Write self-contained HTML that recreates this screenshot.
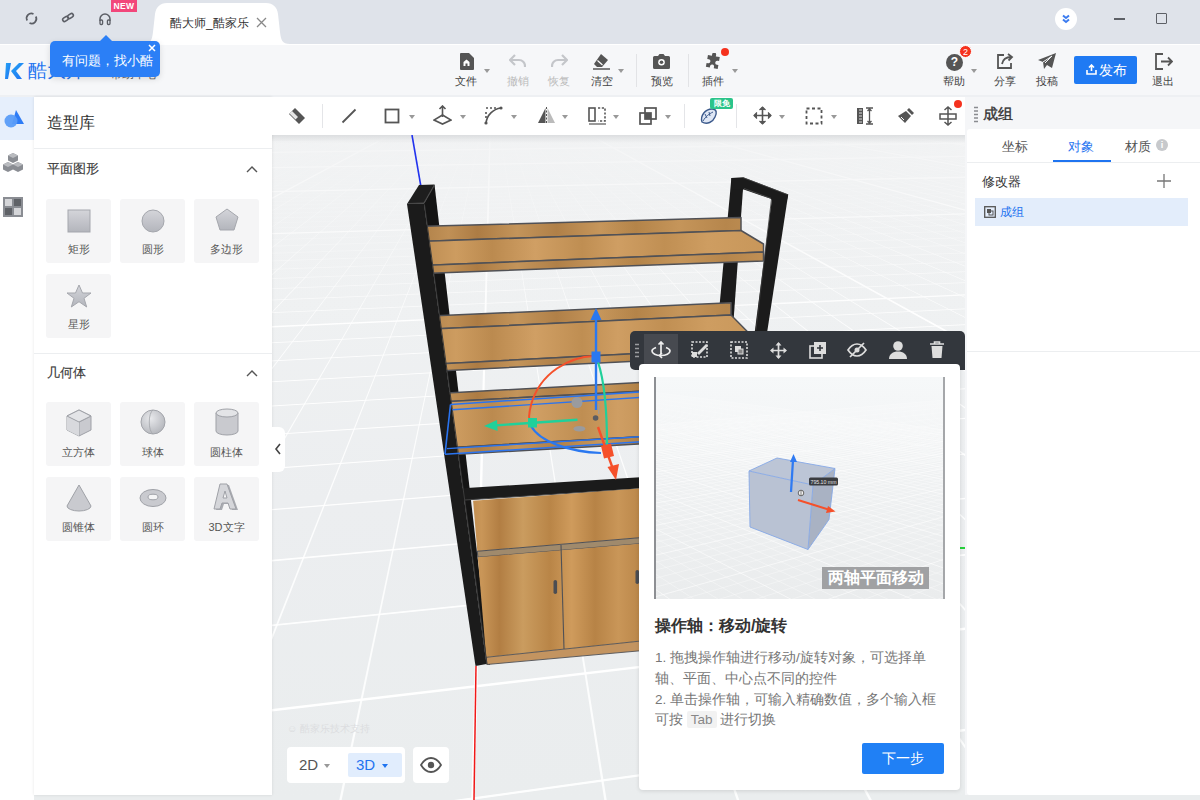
<!DOCTYPE html>
<html><head><meta charset="utf-8">
<style>
*{margin:0;padding:0;box-sizing:border-box}
html,body{width:1200px;height:800px;overflow:hidden;background:#eaedee;font-family:"Liberation Sans",sans-serif;color:#333}
.a{position:absolute}
svg{display:block}
.tabbar{left:0;top:0;width:1200px;height:44px;background:#dfe3ea}
.tab{left:143px;top:2px;width:147px;height:42px}
.hdr{left:0;top:44px;width:1200px;height:53px;background:#f6f7f9}
.side{left:0;top:97px;width:34px;height:703px;background:#fff}
.lp{left:34px;top:97px;width:238px;height:698px;background:#fff;box-shadow:0 0 3px rgba(0,0,0,.10)}
.tb2{left:272px;top:97px;width:693px;height:38px;background:#fff}
.vp{left:272px;top:135px;width:693px;height:665px;background:#e8e9ea;overflow:hidden}
.rp{left:965px;top:97px;width:235px;height:698px;background:#f5f6f8}
.lbl{font-size:11px;color:#555;text-align:center;line-height:12px;white-space:nowrap}
.tile{width:65px;height:64px;background:#f5f5f6;border-radius:3px}
.hi{width:40px;text-align:center;font-size:11px;line-height:12px;color:#444;white-space:nowrap}
.caret{width:0;height:0;border-left:3px solid transparent;border-right:3px solid transparent;border-top:4px solid #999}
</style></head><body>
<!-- TAB BAR -->
<div class="a tabbar"></div>
<svg class="a tab" width="147" height="42" viewBox="0 0 147 42"><path d="M0 42 C8 42 9 38 10 30 L12 12 C13 5 17 1 24 1 L123 1 C130 1 134 5 135 12 L137 30 C138 38 139 42 147 42 Z" fill="#fff"/></svg>
<div class="a" style="left:170px;top:16px;width:82px;font-size:12px;line-height:14px;color:#333;white-space:nowrap">酷大师_酷家乐</div>
<svg class="a" style="left:256px;top:17px" width="11" height="11"><path d="M1 1L10 10M10 1L1 10" stroke="#888" stroke-width="1.3"/></svg>
<!-- tab bar icons -->
<svg class="a" style="left:24px;top:11px" width="15" height="15" viewBox="0 0 15 15"><path d="M3.2 9.5A4.8 4.8 0 0 1 9.5 2.9" fill="none" stroke="#5c5f66" stroke-width="1.7"/><path d="M11.8 5.5A4.8 4.8 0 0 1 5.5 12.1" fill="none" stroke="#5c5f66" stroke-width="1.7"/></svg>
<svg class="a" style="left:61px;top:11px" width="14" height="14" viewBox="0 0 14 14"><rect x="1.5" y="6.2" width="6" height="3.6" rx="1.8" transform="rotate(-35 4.5 8)" fill="none" stroke="#5c5f66" stroke-width="1.6"/><rect x="6.5" y="3.2" width="6" height="3.6" rx="1.8" transform="rotate(-35 9.5 5)" fill="none" stroke="#5c5f66" stroke-width="1.6"/></svg>
<svg class="a" style="left:98px;top:12px" width="14" height="14" viewBox="0 0 14 14"><path d="M2 9V7a5 5 0 0 1 10 0v2" fill="none" stroke="#5c5f66" stroke-width="1.5"/><rect x="2" y="8" width="2.6" height="4.5" rx="1" fill="none" stroke="#5c5f66" stroke-width="1.3"/><rect x="9.4" y="8" width="2.6" height="4.5" rx="1" fill="none" stroke="#5c5f66" stroke-width="1.3"/></svg>
<div class="a" style="left:111px;top:0;width:26px;height:12px;background:#f2477b;color:#fff;font-size:8.5px;line-height:12px;text-align:center;font-weight:bold;letter-spacing:.4px">NEW</div>
<!-- window controls -->
<div class="a" style="left:1055px;top:8px;width:22px;height:22px;border-radius:11px;background:#fff"></div>
<svg class="a" style="left:1060px;top:13px" width="12" height="12" viewBox="0 0 12 12"><path d="M3 2.5L6 5L9 2.5M3 6.5L6 9L9 6.5" fill="none" stroke="#3c7cf0" stroke-width="2"/></svg>
<div class="a" style="left:1114px;top:18px;width:11px;height:1.5px;background:#5d6066"></div>
<div class="a" style="left:1156px;top:13px;width:11px;height:11px;border:1.8px solid #5d6066;border-radius:1px"></div>

<!-- HEADER -->
<div class="a hdr"></div>
<div class="a" style="left:0;top:44px;width:1200px;height:1px;background:#fff"></div>
<div class="a" style="left:0;top:95px;width:1200px;height:2px;background:#eef0f3"></div>
<div class="a" style="left:5px;top:61px;width:20px;height:20px">
<svg width="20" height="20" viewBox="0 0 20 20"><defs><linearGradient id="kg" x1="0" y1="0" x2="1" y2="1"><stop offset="0" stop-color="#25a6f5"/><stop offset="1" stop-color="#1f6ff2"/></linearGradient></defs><path d="M1 2h5l-3 16H0z" fill="url(#kg)"/><path d="M6 10L14 2h5l-8 8 6 8h-5z" fill="url(#kg)"/></svg>
</div>
<div class="a" style="left:28px;top:60px;font-size:19px;line-height:22px;color:#1f74f0;white-space:nowrap">酷大师</div>
<div class="a" style="left:110px;top:67px;font-size:12px;line-height:14px;color:#666;white-space:nowrap">帮助中心</div>


<!-- header toolbar -->
<div class="a" style="left:446px;top:52px;width:300px;height:40px">
</div>
<svg class="a" style="left:459px;top:53px" width="15" height="17" viewBox="0 0 15 17"><path d="M2 0h8l5 5v11a1 1 0 0 1-1 1H2a1 1 0 0 1-1-1V1a1 1 0 0 1 1-1z" fill="#555"/><path d="M4.5 13V9l3-2.5 3 2.5v4z" fill="#fff"/><rect x="6.5" y="10.5" width="2" height="2.5" fill="#555"/></svg>
<div class="a caret" style="left:484px;top:69px"></div>
<div class="a hi" style="left:446px;top:75px">文件</div>
<svg class="a" style="left:509px;top:54px" width="17" height="14" viewBox="0 0 17 14"><path d="M6 1L1 6l5 5" fill="none" stroke="#c4c6ca" stroke-width="2.2"/><path d="M2 6h8a6 6 0 0 1 6 6v1" fill="none" stroke="#c4c6ca" stroke-width="2.2"/></svg>
<div class="a hi" style="left:498px;top:75px;color:#bbb">撤销</div>
<svg class="a" style="left:551px;top:54px" width="17" height="14" viewBox="0 0 17 14"><path d="M11 1l5 5-5 5" fill="none" stroke="#c4c6ca" stroke-width="2.2"/><path d="M15 6H7a6 6 0 0 0-6 6v1" fill="none" stroke="#c4c6ca" stroke-width="2.2"/></svg>
<div class="a hi" style="left:539px;top:75px;color:#bbb">恢复</div>
<svg class="a" style="left:592px;top:53px" width="19" height="17" viewBox="0 0 19 17"><path d="M9 1l7 6-6 7H5L2 11z" fill="#555"/><path d="M5.5 7.5l5 4.5" stroke="#fff" stroke-width="1.2"/><path d="M1 16h17" stroke="#555" stroke-width="1.5"/></svg>
<div class="a caret" style="left:618px;top:69px"></div>
<div class="a hi" style="left:582px;top:75px">清空</div>
<div class="a" style="left:636px;top:54px;width:1px;height:33px;background:#e2e3e6"></div>
<svg class="a" style="left:653px;top:54px" width="17" height="15" viewBox="0 0 17 15"><path d="M5 2l1.5-2h4L12 2h3.5a1.5 1.5 0 0 1 1.5 1.5v10a1.5 1.5 0 0 1-1.5 1.5h-14A1.5 1.5 0 0 1 0 13.5v-10A1.5 1.5 0 0 1 1.5 2z" fill="#555"/><circle cx="8.5" cy="8.3" r="3.3" fill="#fff"/><circle cx="8.5" cy="8.3" r="1.8" fill="#555"/></svg>
<div class="a hi" style="left:642px;top:75px">预览</div>
<div class="a" style="left:688px;top:54px;width:1px;height:33px;background:#e2e3e6"></div>
<svg class="a" style="left:705px;top:53px" width="17" height="17" viewBox="0 0 17 17"><path d="M6 1.5a2 2 0 0 1 4 0V3h4v4h-1.5a2 2 0 0 0 0 4H14v4H10v-1.5a2 2 0 0 0-4 0V15H2v-4h1.5a2 2 0 0 0 0-4H2V3h4z" fill="#555" transform="rotate(10 8 8)"/></svg>
<div class="a" style="left:721px;top:48px;width:8px;height:8px;border-radius:4px;background:#f5321e"></div>
<div class="a caret" style="left:732px;top:69px"></div>
<div class="a hi" style="left:693px;top:75px">插件</div>
<!-- right header -->
<div class="a" style="left:946px;top:54px;width:17px;height:17px;border-radius:9px;background:#555;color:#fff;font-weight:bold;font-size:12px;line-height:17px;text-align:center">?</div>
<div class="a" style="left:959px;top:45px;width:13px;height:13px;border-radius:7px;background:#f5321e;color:#fff;font-size:9px;line-height:13px;text-align:center;border:1px solid #fff">2</div>
<div class="a caret" style="left:971px;top:69px"></div>
<div class="a hi" style="left:934px;top:75px">帮助</div>
<svg class="a" style="left:996px;top:53px" width="18" height="17" viewBox="0 0 18 17"><path d="M8 2H2v13h13V10" fill="none" stroke="#555" stroke-width="1.8"/><path d="M6 11c1-5 4-7 9-7" fill="none" stroke="#555" stroke-width="1.8"/><path d="M12 1l4 3-3.5 3.5" fill="none" stroke="#555" stroke-width="1.8"/></svg>
<div class="a hi" style="left:985px;top:75px">分享</div>
<svg class="a" style="left:1038px;top:53px" width="19" height="17" viewBox="0 0 19 17"><path d="M18 0L0 7l5 2 1 7 3-4 5 3z" fill="#555"/><path d="M5 9l9-6-7 7" fill="none" stroke="#f6f7f9" stroke-width="1"/></svg>
<div class="a hi" style="left:1027px;top:75px">投稿</div>
<div class="a" style="left:1074px;top:56px;width:63px;height:28px;border-radius:2px;background:#1f7af3"></div>
<svg class="a" style="left:1086px;top:64px" width="11" height="11" viewBox="0 0 11 11"><path d="M5.5 1v6M3 3.5L5.5 1 8 3.5" fill="none" stroke="#fff" stroke-width="1.6"/><path d="M1 6v4h9V6" fill="none" stroke="#fff" stroke-width="1.6"/></svg>
<div class="a" style="left:1099px;top:62px;font-size:14px;line-height:16px;color:#fff;white-space:nowrap">发布</div>
<svg class="a" style="left:1155px;top:53px" width="18" height="17" viewBox="0 0 18 17"><path d="M8 1H1v15h7" fill="none" stroke="#555" stroke-width="1.8"/><path d="M6 8.5h11M13 4.5l4 4-4 4" fill="none" stroke="#555" stroke-width="1.8"/></svg>
<div class="a hi" style="left:1143px;top:75px">退出</div>

<!--VP-->
<svg class="a" style="left:272px;top:135px" width="693" height="665" viewBox="272 135 693 665">
<defs>
<linearGradient id="vbg" x1="0" y1="135" x2="0" y2="800" gradientUnits="userSpaceOnUse">
<stop offset="0" stop-color="#f2f4f5"/><stop offset="0.25" stop-color="#eff1f2"/><stop offset="0.55" stop-color="#eceef0"/><stop offset="1" stop-color="#eaedee"/></linearGradient>
<linearGradient id="fog" x1="0" y1="135" x2="0" y2="800" gradientUnits="userSpaceOnUse">
<stop offset="0" stop-color="#f1f2f3" stop-opacity=".8"/><stop offset="0.1" stop-color="#f0f1f2" stop-opacity=".45"/><stop offset="0.3" stop-color="#eeeff0" stop-opacity="0"/></linearGradient>
</defs>
<rect x="272" y="135" width="693" height="665" fill="url(#vbg)"/>
<g><path d="M-179.6 95.0L1375.6 91.2" stroke="#fff" stroke-width="1.30" opacity="1.00"/>
<path d="M-182.0 95.1L1378.0 91.2" stroke="#fff" stroke-width="0.45" opacity="0.25"/>
<path d="M-184.6 95.1L1380.4 91.3" stroke="#fff" stroke-width="0.45" opacity="0.25"/>
<path d="M-187.1 95.2L1382.8 91.3" stroke="#fff" stroke-width="0.45" opacity="0.25"/>
<path d="M-189.6 95.2L1385.3 91.3" stroke="#fff" stroke-width="0.45" opacity="0.25"/>
<path d="M-192.2 95.3L1387.7 91.3" stroke="#fff" stroke-width="0.45" opacity="0.25"/>
<path d="M-194.8 95.4L1390.2 91.4" stroke="#fff" stroke-width="0.45" opacity="0.25"/>
<path d="M-197.4 95.4L1392.7 91.4" stroke="#fff" stroke-width="0.45" opacity="0.25"/>
<path d="M-200.0 95.5L1395.2 91.4" stroke="#fff" stroke-width="0.45" opacity="0.25"/>
<path d="M-175.9 95.5L1397.7 91.5" stroke="#fff" stroke-width="0.45" opacity="0.25"/>
<path d="M-178.5 95.5L1374.6 91.6" stroke="#fff" stroke-width="1.30" opacity="1.00"/>
<path d="M-181.0 95.6L1377.0 91.6" stroke="#fff" stroke-width="0.45" opacity="0.25"/>
<path d="M-183.6 95.6L1379.5 91.6" stroke="#fff" stroke-width="0.45" opacity="0.25"/>
<path d="M-186.2 95.7L1382.0 91.6" stroke="#fff" stroke-width="0.45" opacity="0.25"/>
<path d="M-188.9 95.7L1384.5 91.7" stroke="#fff" stroke-width="0.45" opacity="0.25"/>
<path d="M-191.5 95.8L1387.1 91.7" stroke="#fff" stroke-width="0.45" opacity="0.25"/>
<path d="M-194.2 95.9L1389.6 91.7" stroke="#fff" stroke-width="0.45" opacity="0.25"/>
<path d="M-196.9 95.9L1392.2 91.8" stroke="#fff" stroke-width="0.45" opacity="0.25"/>
<path d="M-199.6 96.0L1394.7 91.8" stroke="#fff" stroke-width="0.45" opacity="0.25"/>
<path d="M-175.6 96.0L1397.3 91.8" stroke="#fff" stroke-width="0.45" opacity="0.25"/>
<path d="M-178.3 96.0L1399.9 91.9" stroke="#fff" stroke-width="1.30" opacity="1.00"/>
<path d="M-180.9 96.1L1376.9 92.0" stroke="#fff" stroke-width="0.45" opacity="0.25"/>
<path d="M-183.6 96.1L1379.5 92.0" stroke="#fff" stroke-width="0.45" opacity="0.25"/>
<path d="M-186.3 96.2L1382.0 92.0" stroke="#fff" stroke-width="0.45" opacity="0.25"/>
<path d="M-189.0 96.3L1384.7 92.1" stroke="#fff" stroke-width="0.45" opacity="0.25"/>
<path d="M-191.7 96.3L1387.3 92.1" stroke="#fff" stroke-width="0.45" opacity="0.25"/>
<path d="M-194.5 96.4L1389.9 92.1" stroke="#fff" stroke-width="0.45" opacity="0.25"/>
<path d="M-197.3 96.5L1392.6 92.2" stroke="#fff" stroke-width="0.45" opacity="0.25"/>
<path d="M-173.5 96.4L1395.2 92.2" stroke="#fff" stroke-width="0.45" opacity="0.25"/>
<path d="M-176.2 96.5L1397.9 92.2" stroke="#fff" stroke-width="0.45" opacity="0.25"/>
<path d="M-179.0 96.6L1375.0 92.3" stroke="#fff" stroke-width="1.30" opacity="1.00"/>
<path d="M-181.7 96.6L1377.6 92.4" stroke="#fff" stroke-width="0.45" opacity="0.25"/>
<path d="M-184.5 96.7L1380.3 92.4" stroke="#fff" stroke-width="0.45" opacity="0.25"/>
<path d="M-187.3 96.8L1383.0 92.4" stroke="#fff" stroke-width="0.45" opacity="0.25"/>
<path d="M-190.1 96.8L1385.7 92.5" stroke="#fff" stroke-width="0.45" opacity="0.25"/>
<path d="M-193.0 96.9L1388.4 92.5" stroke="#fff" stroke-width="0.45" opacity="0.25"/>
<path d="M-195.8 97.0L1391.2 92.5" stroke="#fff" stroke-width="0.45" opacity="0.25"/>
<path d="M-198.7 97.0L1393.9 92.6" stroke="#fff" stroke-width="0.45" opacity="0.25"/>
<path d="M-175.0 97.0L1396.7 92.6" stroke="#fff" stroke-width="0.45" opacity="0.25"/>
<path d="M-177.8 97.1L1399.5 92.7" stroke="#fff" stroke-width="0.45" opacity="0.25"/>
<path d="M-180.7 97.2L1376.6 92.8" stroke="#fff" stroke-width="1.30" opacity="1.00"/>
<path d="M-183.5 97.2L1379.4 92.8" stroke="#fff" stroke-width="0.45" opacity="0.25"/>
<path d="M-186.4 97.3L1382.1 92.8" stroke="#fff" stroke-width="0.45" opacity="0.25"/>
<path d="M-189.3 97.4L1384.9 92.9" stroke="#fff" stroke-width="0.45" opacity="0.25"/>
<path d="M-192.3 97.5L1387.7 92.9" stroke="#fff" stroke-width="0.45" opacity="0.25"/>
<path d="M-195.3 97.5L1390.6 93.0" stroke="#fff" stroke-width="0.45" opacity="0.25"/>
<path d="M-198.2 97.6L1393.4 93.0" stroke="#fff" stroke-width="0.45" opacity="0.25"/>
<path d="M-174.6 97.6L1396.3 93.0" stroke="#fff" stroke-width="0.45" opacity="0.25"/>
<path d="M-177.6 97.7L1399.2 93.1" stroke="#fff" stroke-width="0.45" opacity="0.25"/>
<path d="M-180.5 97.8L1376.4 93.2" stroke="#fff" stroke-width="0.45" opacity="0.25"/>
<path d="M-183.5 97.8L1379.3 93.2" stroke="#fff" stroke-width="1.30" opacity="1.00"/>
<path d="M-186.5 97.9L1382.1 93.3" stroke="#fff" stroke-width="0.45" opacity="0.25"/>
<path d="M-189.5 98.0L1385.0 93.3" stroke="#fff" stroke-width="0.45" opacity="0.25"/>
<path d="M-192.5 98.1L1387.9 93.4" stroke="#fff" stroke-width="0.45" opacity="0.25"/>
<path d="M-195.6 98.1L1390.9 93.4" stroke="#fff" stroke-width="0.45" opacity="0.25"/>
<path d="M-198.7 98.2L1393.8 93.4" stroke="#fff" stroke-width="0.45" opacity="0.25"/>
<path d="M-175.2 98.2L1396.8 93.5" stroke="#fff" stroke-width="0.45" opacity="0.25"/>
<path d="M-178.2 98.3L1399.8 93.5" stroke="#fff" stroke-width="0.45" opacity="0.25"/>
<path d="M-181.2 98.4L1377.1 93.6" stroke="#fff" stroke-width="0.45" opacity="0.25"/>
<path d="M-184.3 98.5L1380.1 93.7" stroke="#fff" stroke-width="0.45" opacity="0.25"/>
<path d="M-187.4 98.5L1383.0 93.7" stroke="#fff" stroke-width="1.30" opacity="1.00"/>
<path d="M-190.6 98.6L1386.0 93.8" stroke="#fff" stroke-width="0.45" opacity="0.25"/>
<path d="M-193.7 98.7L1389.1 93.8" stroke="#fff" stroke-width="0.45" opacity="0.25"/>
<path d="M-196.9 98.8L1392.1 93.9" stroke="#fff" stroke-width="0.45" opacity="0.25"/>
<path d="M-173.6 98.8L1395.2 93.9" stroke="#fff" stroke-width="0.45" opacity="0.25"/>
<path d="M-176.7 98.9L1398.2 93.9" stroke="#fff" stroke-width="0.45" opacity="0.25"/>
<path d="M-179.8 99.0L1375.7 94.1" stroke="#fff" stroke-width="0.45" opacity="0.25"/>
<path d="M-183.0 99.0L1378.8 94.1" stroke="#fff" stroke-width="0.45" opacity="0.25"/>
<path d="M-186.2 99.1L1381.8 94.2" stroke="#fff" stroke-width="0.45" opacity="0.25"/>
<path d="M-189.4 99.2L1384.9 94.2" stroke="#fff" stroke-width="0.45" opacity="0.25"/>
<path d="M-192.7 99.3L1388.1 94.3" stroke="#fff" stroke-width="1.30" opacity="1.00"/>
<path d="M-196.0 99.4L1391.2 94.3" stroke="#fff" stroke-width="0.45" opacity="0.25"/>
<path d="M-199.3 99.5L1394.4 94.4" stroke="#fff" stroke-width="0.45" opacity="0.25"/>
<path d="M-176.0 99.5L1397.5 94.4" stroke="#fff" stroke-width="0.45" opacity="0.25"/>
<path d="M-179.3 99.6L1375.1 94.5" stroke="#fff" stroke-width="0.45" opacity="0.25"/>
<path d="M-182.5 99.7L1378.3 94.6" stroke="#fff" stroke-width="0.45" opacity="0.25"/>
<path d="M-185.8 99.8L1381.5 94.6" stroke="#fff" stroke-width="0.45" opacity="0.25"/>
<path d="M-189.2 99.9L1384.7 94.7" stroke="#fff" stroke-width="0.45" opacity="0.25"/>
<path d="M-192.6 100.0L1387.9 94.7" stroke="#fff" stroke-width="0.45" opacity="0.25"/>
<path d="M-196.0 100.0L1391.1 94.8" stroke="#fff" stroke-width="0.45" opacity="0.25"/>
<path d="M-199.4 100.1L1394.4 94.8" stroke="#fff" stroke-width="1.30" opacity="1.00"/>
<path d="M-176.2 100.2L1397.7 94.9" stroke="#fff" stroke-width="0.45" opacity="0.25"/>
<path d="M-179.6 100.2L1375.4 95.0" stroke="#fff" stroke-width="0.45" opacity="0.25"/>
<path d="M-183.0 100.3L1378.7 95.1" stroke="#fff" stroke-width="0.45" opacity="0.25"/>
<path d="M-186.4 100.4L1382.0 95.1" stroke="#fff" stroke-width="0.45" opacity="0.25"/>
<path d="M-189.9 100.5L1385.3 95.2" stroke="#fff" stroke-width="0.45" opacity="0.25"/>
<path d="M-193.4 100.7L1388.6 95.2" stroke="#fff" stroke-width="0.45" opacity="0.25"/>
<path d="M-196.9 100.8L1392.0 95.3" stroke="#fff" stroke-width="0.45" opacity="0.25"/>
<path d="M-173.9 100.8L1395.4 95.3" stroke="#fff" stroke-width="0.45" opacity="0.25"/>
<path d="M-177.4 100.9L1398.8 95.4" stroke="#fff" stroke-width="0.45" opacity="0.25"/>
<path d="M-180.9 101.0L1376.6 95.5" stroke="#fff" stroke-width="1.30" opacity="1.00"/>
<path d="M-184.4 101.1L1380.0 95.6" stroke="#fff" stroke-width="0.45" opacity="0.25"/>
<path d="M-188.0 101.2L1383.4 95.7" stroke="#fff" stroke-width="0.45" opacity="0.25"/>
<path d="M-191.6 101.3L1386.9 95.7" stroke="#fff" stroke-width="0.45" opacity="0.25"/>
<path d="M-195.2 101.4L1390.4 95.8" stroke="#fff" stroke-width="0.45" opacity="0.25"/>
<path d="M-198.9 101.5L1393.9 95.8" stroke="#fff" stroke-width="0.45" opacity="0.25"/>
<path d="M-176.0 101.5L1397.4 95.9" stroke="#fff" stroke-width="0.45" opacity="0.25"/>
<path d="M-179.6 101.6L1375.3 96.0" stroke="#fff" stroke-width="0.45" opacity="0.25"/>
<path d="M-183.2 101.8L1378.8 96.1" stroke="#fff" stroke-width="0.45" opacity="0.25"/>
<path d="M-186.9 101.9L1382.4 96.2" stroke="#fff" stroke-width="0.45" opacity="0.25"/>
<path d="M-190.6 102.0L1385.9 96.2" stroke="#fff" stroke-width="1.30" opacity="1.00"/>
<path d="M-194.4 102.1L1389.5 96.3" stroke="#fff" stroke-width="0.45" opacity="0.25"/>
<path d="M-198.2 102.2L1393.2 96.4" stroke="#fff" stroke-width="0.45" opacity="0.25"/>
<path d="M-175.4 102.2L1396.8 96.4" stroke="#fff" stroke-width="0.45" opacity="0.25"/>
<path d="M-179.1 102.4L1374.9 96.6" stroke="#fff" stroke-width="0.45" opacity="0.25"/>
<path d="M-182.9 102.5L1378.5 96.6" stroke="#fff" stroke-width="0.45" opacity="0.25"/>
<path d="M-186.7 102.6L1382.1 96.7" stroke="#fff" stroke-width="0.45" opacity="0.25"/>
<path d="M-190.5 102.7L1385.8 96.8" stroke="#fff" stroke-width="0.45" opacity="0.25"/>
<path d="M-194.4 102.9L1389.6 96.8" stroke="#fff" stroke-width="0.45" opacity="0.25"/>
<path d="M-198.4 103.0L1393.3 96.9" stroke="#fff" stroke-width="0.45" opacity="0.25"/>
<path d="M-175.7 103.0L1397.1 97.0" stroke="#fff" stroke-width="1.30" opacity="1.00"/>
<path d="M-179.6 103.1L1375.3 97.1" stroke="#fff" stroke-width="0.45" opacity="0.25"/>
<path d="M-183.5 103.3L1379.0 97.2" stroke="#fff" stroke-width="0.45" opacity="0.25"/>
<path d="M-187.4 103.4L1382.8 97.3" stroke="#fff" stroke-width="0.45" opacity="0.25"/>
<path d="M-191.4 103.5L1386.6 97.4" stroke="#fff" stroke-width="0.45" opacity="0.25"/>
<path d="M-195.5 103.7L1390.5 97.4" stroke="#fff" stroke-width="0.45" opacity="0.25"/>
<path d="M-199.6 103.8L1394.4 97.5" stroke="#fff" stroke-width="0.45" opacity="0.25"/>
<path d="M-177.0 103.8L1398.3 97.6" stroke="#fff" stroke-width="0.45" opacity="0.25"/>
<path d="M-181.0 104.0L1376.6 97.7" stroke="#fff" stroke-width="0.45" opacity="0.25"/>
<path d="M-185.1 104.1L1380.5 97.8" stroke="#fff" stroke-width="0.45" opacity="0.25"/>
<path d="M-189.2 104.3L1384.5 97.9" stroke="#fff" stroke-width="1.30" opacity="1.00"/>
<path d="M-193.3 104.4L1388.4 98.0" stroke="#fff" stroke-width="0.45" opacity="0.25"/>
<path d="M-197.5 104.6L1392.4 98.1" stroke="#fff" stroke-width="0.45" opacity="0.25"/>
<path d="M-175.2 104.6L1396.5 98.1" stroke="#fff" stroke-width="0.45" opacity="0.25"/>
<path d="M-179.3 104.7L1374.9 98.3" stroke="#fff" stroke-width="0.45" opacity="0.25"/>
<path d="M-183.5 104.9L1379.0 98.4" stroke="#fff" stroke-width="0.45" opacity="0.25"/>
<path d="M-187.7 105.0L1383.0 98.5" stroke="#fff" stroke-width="0.45" opacity="0.25"/>
<path d="M-192.0 105.2L1387.1 98.6" stroke="#fff" stroke-width="0.45" opacity="0.25"/>
<path d="M-196.3 105.4L1391.3 98.6" stroke="#fff" stroke-width="0.45" opacity="0.25"/>
<path d="M-174.2 105.4L1395.5 98.7" stroke="#fff" stroke-width="0.45" opacity="0.25"/>
<path d="M-178.4 105.6L1399.7 98.8" stroke="#fff" stroke-width="1.30" opacity="1.00"/>
<path d="M-182.7 105.7L1378.2 99.0" stroke="#fff" stroke-width="0.45" opacity="0.25"/>
<path d="M-187.1 105.9L1382.4 99.1" stroke="#fff" stroke-width="0.45" opacity="0.25"/>
<path d="M-191.6 106.0L1386.7 99.2" stroke="#fff" stroke-width="0.45" opacity="0.25"/>
<path d="M-196.0 106.2L1391.0 99.3" stroke="#fff" stroke-width="0.45" opacity="0.25"/>
<path d="M-174.0 106.3L1395.3 99.4" stroke="#fff" stroke-width="0.45" opacity="0.25"/>
<path d="M-178.4 106.4L1399.6 99.4" stroke="#fff" stroke-width="0.45" opacity="0.25"/>
<path d="M-182.9 106.6L1378.3 99.6" stroke="#fff" stroke-width="0.45" opacity="0.25"/>
<path d="M-187.4 106.8L1382.7 99.7" stroke="#fff" stroke-width="0.45" opacity="0.25"/>
<path d="M-192.0 107.0L1387.1 99.8" stroke="#fff" stroke-width="0.45" opacity="0.25"/>
<path d="M-196.7 107.1L1391.5 99.9" stroke="#fff" stroke-width="1.30" opacity="1.00"/>
<path d="M-174.8 107.2L1396.0 100.0" stroke="#fff" stroke-width="0.45" opacity="0.25"/>
<path d="M-179.4 107.4L1374.9 100.2" stroke="#fff" stroke-width="0.45" opacity="0.25"/>
<path d="M-184.0 107.6L1379.4 100.3" stroke="#fff" stroke-width="0.45" opacity="0.25"/>
<path d="M-188.7 107.7L1383.9 100.4" stroke="#fff" stroke-width="0.45" opacity="0.25"/>
<path d="M-193.5 107.9L1388.5 100.5" stroke="#fff" stroke-width="0.45" opacity="0.25"/>
<path d="M-198.4 108.1L1393.1 100.6" stroke="#fff" stroke-width="0.45" opacity="0.25"/>
<path d="M-176.6 108.2L1397.7 100.7" stroke="#fff" stroke-width="0.45" opacity="0.25"/>
<path d="M-181.3 108.4L1376.8 101.0" stroke="#fff" stroke-width="0.45" opacity="0.25"/>
<path d="M-186.2 108.6L1381.4 101.1" stroke="#fff" stroke-width="0.45" opacity="0.25"/>
<path d="M-191.1 108.8L1386.1 101.2" stroke="#fff" stroke-width="1.30" opacity="1.00"/>
<path d="M-196.1 109.0L1390.9 101.3" stroke="#fff" stroke-width="0.45" opacity="0.25"/>
<path d="M-174.5 109.1L1395.7 101.4" stroke="#fff" stroke-width="0.45" opacity="0.25"/>
<path d="M-179.4 109.3L1374.9 101.6" stroke="#fff" stroke-width="0.45" opacity="0.25"/>
<path d="M-184.4 109.5L1379.7 101.8" stroke="#fff" stroke-width="0.45" opacity="0.25"/>
<path d="M-189.5 109.7L1384.5 101.9" stroke="#fff" stroke-width="0.45" opacity="0.25"/>
<path d="M-194.6 109.9L1389.4 102.0" stroke="#fff" stroke-width="0.45" opacity="0.25"/>
<path d="M-199.8 110.1L1394.4 102.1" stroke="#fff" stroke-width="0.45" opacity="0.25"/>
<path d="M-178.3 110.2L1399.4 102.2" stroke="#fff" stroke-width="0.45" opacity="0.25"/>
<path d="M-183.5 110.5L1378.7 102.5" stroke="#fff" stroke-width="0.45" opacity="0.25"/>
<path d="M-188.7 110.7L1383.7 102.6" stroke="#fff" stroke-width="1.30" opacity="1.00"/>
<path d="M-194.0 110.9L1388.8 102.7" stroke="#fff" stroke-width="0.45" opacity="0.25"/>
<path d="M-199.4 111.2L1393.9 102.8" stroke="#fff" stroke-width="0.45" opacity="0.25"/>
<path d="M-178.1 111.3L1399.1 103.0" stroke="#fff" stroke-width="0.45" opacity="0.25"/>
<path d="M-183.4 111.5L1378.6 103.2" stroke="#fff" stroke-width="0.45" opacity="0.25"/>
<path d="M-188.8 111.8L1383.8 103.4" stroke="#fff" stroke-width="0.45" opacity="0.25"/>
<path d="M-194.3 112.0L1389.0 103.5" stroke="#fff" stroke-width="0.45" opacity="0.25"/>
<path d="M-199.9 112.3L1394.4 103.6" stroke="#fff" stroke-width="0.45" opacity="0.25"/>
<path d="M-178.8 112.4L1399.7 103.8" stroke="#fff" stroke-width="0.45" opacity="0.25"/>
<path d="M-184.3 112.6L1379.4 104.0" stroke="#fff" stroke-width="0.45" opacity="0.25"/>
<path d="M-189.9 112.9L1384.8 104.2" stroke="#fff" stroke-width="1.30" opacity="1.00"/>
<path d="M-195.6 113.2L1390.2 104.3" stroke="#fff" stroke-width="0.45" opacity="0.25"/>
<path d="M-174.8 113.3L1395.7 104.5" stroke="#fff" stroke-width="0.45" opacity="0.25"/>
<path d="M-180.5 113.6L1375.7 104.8" stroke="#fff" stroke-width="0.45" opacity="0.25"/>
<path d="M-186.2 113.8L1381.2 104.9" stroke="#fff" stroke-width="0.45" opacity="0.25"/>
<path d="M-192.0 114.1L1386.8 105.1" stroke="#fff" stroke-width="0.45" opacity="0.25"/>
<path d="M-198.0 114.4L1392.4 105.2" stroke="#fff" stroke-width="0.45" opacity="0.25"/>
<path d="M-177.3 114.6L1398.2 105.4" stroke="#fff" stroke-width="0.45" opacity="0.25"/>
<path d="M-183.2 114.9L1378.3 105.7" stroke="#fff" stroke-width="0.45" opacity="0.25"/>
<path d="M-189.2 115.2L1384.0 105.8" stroke="#fff" stroke-width="0.45" opacity="0.25"/>
<path d="M-195.3 115.5L1389.8 106.0" stroke="#fff" stroke-width="1.30" opacity="1.00"/>
<path d="M-174.9 115.6L1395.8 106.2" stroke="#fff" stroke-width="0.45" opacity="0.25"/>
<path d="M-181.0 115.9L1376.1 106.5" stroke="#fff" stroke-width="0.45" opacity="0.25"/>
<path d="M-187.1 116.3L1382.0 106.7" stroke="#fff" stroke-width="0.45" opacity="0.25"/>
<path d="M-193.4 116.6L1388.0 106.9" stroke="#fff" stroke-width="0.45" opacity="0.25"/>
<path d="M-199.8 116.9L1394.1 107.0" stroke="#fff" stroke-width="0.45" opacity="0.25"/>
<path d="M-179.5 117.1L1374.6 107.4" stroke="#fff" stroke-width="0.45" opacity="0.25"/>
<path d="M-185.9 117.4L1380.7 107.6" stroke="#fff" stroke-width="0.45" opacity="0.25"/>
<path d="M-192.4 117.8L1386.9 107.7" stroke="#fff" stroke-width="0.45" opacity="0.25"/>
<path d="M-199.0 118.2L1393.2 107.9" stroke="#fff" stroke-width="0.45" opacity="0.25"/>
<path d="M-178.9 118.4L1399.6 108.1" stroke="#fff" stroke-width="1.30" opacity="1.00"/>
<path d="M-185.5 118.7L1380.3 108.5" stroke="#fff" stroke-width="0.45" opacity="0.25"/>
<path d="M-192.2 119.1L1386.7 108.7" stroke="#fff" stroke-width="0.45" opacity="0.25"/>
<path d="M-199.0 119.5L1393.2 108.9" stroke="#fff" stroke-width="0.45" opacity="0.25"/>
<path d="M-179.2 119.7L1399.8 109.1" stroke="#fff" stroke-width="0.45" opacity="0.25"/>
<path d="M-186.0 120.1L1380.8 109.5" stroke="#fff" stroke-width="0.45" opacity="0.25"/>
<path d="M-193.0 120.5L1387.4 109.7" stroke="#fff" stroke-width="0.45" opacity="0.25"/>
<path d="M-173.5 120.7L1394.2 109.9" stroke="#fff" stroke-width="0.45" opacity="0.25"/>
<path d="M-180.5 121.1L1375.4 110.3" stroke="#fff" stroke-width="0.45" opacity="0.25"/>
<path d="M-187.6 121.6L1382.2 110.5" stroke="#fff" stroke-width="0.45" opacity="0.25"/>
<path d="M-194.8 122.0L1389.1 110.8" stroke="#fff" stroke-width="1.30" opacity="1.00"/>
<path d="M-175.6 122.3L1396.1 111.0" stroke="#fff" stroke-width="0.45" opacity="0.25"/>
<path d="M-182.8 122.7L1377.5 111.4" stroke="#fff" stroke-width="0.45" opacity="0.25"/>
<path d="M-190.2 123.2L1384.6 111.7" stroke="#fff" stroke-width="0.45" opacity="0.25"/>
<path d="M-197.7 123.6L1391.8 111.9" stroke="#fff" stroke-width="0.45" opacity="0.25"/>
<path d="M-178.7 123.9L1399.1 112.2" stroke="#fff" stroke-width="0.45" opacity="0.25"/>
<path d="M-186.2 124.4L1380.8 112.6" stroke="#fff" stroke-width="0.45" opacity="0.25"/>
<path d="M-193.9 124.9L1388.1 112.9" stroke="#fff" stroke-width="0.45" opacity="0.25"/>
<path d="M-175.2 125.2L1395.6 113.2" stroke="#fff" stroke-width="0.45" opacity="0.25"/>
<path d="M-183.0 125.7L1377.6 113.6" stroke="#fff" stroke-width="0.45" opacity="0.25"/>
<path d="M-190.9 126.2L1385.2 113.9" stroke="#fff" stroke-width="1.30" opacity="1.00"/>
<path d="M-199.0 126.8L1392.9 114.2" stroke="#fff" stroke-width="0.45" opacity="0.25"/>
<path d="M-180.5 127.1L1375.1 114.7" stroke="#fff" stroke-width="0.45" opacity="0.25"/>
<path d="M-188.6 127.7L1382.9 115.0" stroke="#fff" stroke-width="0.45" opacity="0.25"/>
<path d="M-197.0 128.3L1390.9 115.3" stroke="#fff" stroke-width="0.45" opacity="0.25"/>
<path d="M-178.8 128.6L1399.0 115.6" stroke="#fff" stroke-width="0.45" opacity="0.25"/>
<path d="M-187.1 129.2L1381.4 116.1" stroke="#fff" stroke-width="0.45" opacity="0.25"/>
<path d="M-195.7 129.9L1389.6 116.5" stroke="#fff" stroke-width="0.45" opacity="0.25"/>
<path d="M-177.8 130.3L1398.0 116.8" stroke="#fff" stroke-width="0.45" opacity="0.25"/>
<path d="M-186.5 130.9L1380.8 117.4" stroke="#fff" stroke-width="0.45" opacity="0.25"/>
<path d="M-195.4 131.6L1389.3 117.7" stroke="#fff" stroke-width="1.30" opacity="1.00"/>
<path d="M-177.8 132.0L1397.9 118.1" stroke="#fff" stroke-width="0.45" opacity="0.25"/>
<path d="M-186.8 132.7L1381.0 118.7" stroke="#fff" stroke-width="0.45" opacity="0.25"/>
<path d="M-196.0 133.4L1389.7 119.0" stroke="#fff" stroke-width="0.45" opacity="0.25"/>
<path d="M-178.7 133.9L1398.7 119.4" stroke="#fff" stroke-width="0.45" opacity="0.25"/>
<path d="M-188.0 134.6L1382.1 120.1" stroke="#fff" stroke-width="0.45" opacity="0.25"/>
<path d="M-197.6 135.4L1391.2 120.5" stroke="#fff" stroke-width="0.45" opacity="0.25"/>
<path d="M-180.6 135.9L1374.9 121.1" stroke="#fff" stroke-width="0.45" opacity="0.25"/>
<path d="M-190.4 136.7L1384.2 121.5" stroke="#fff" stroke-width="0.45" opacity="0.25"/>
<path d="M-173.8 137.2L1393.7 122.0" stroke="#fff" stroke-width="0.45" opacity="0.25"/>
<path d="M-183.7 138.1L1377.7 122.7" stroke="#fff" stroke-width="1.30" opacity="1.00"/>
<path d="M-193.8 138.9L1387.4 123.1" stroke="#fff" stroke-width="0.45" opacity="0.25"/>
<path d="M-177.6 139.6L1397.3 123.6" stroke="#fff" stroke-width="0.45" opacity="0.25"/>
<path d="M-187.9 140.5L1381.7 124.3" stroke="#fff" stroke-width="0.45" opacity="0.25"/>
<path d="M-198.5 141.4L1391.8 124.8" stroke="#fff" stroke-width="0.45" opacity="0.25"/>
<path d="M-182.6 142.1L1376.5 125.6" stroke="#fff" stroke-width="0.45" opacity="0.25"/>
<path d="M-193.4 143.1L1386.9 126.1" stroke="#fff" stroke-width="0.45" opacity="0.25"/>
<path d="M-177.9 143.8L1397.5 126.7" stroke="#fff" stroke-width="0.45" opacity="0.25"/>
<path d="M-189.0 144.9L1382.5 127.5" stroke="#fff" stroke-width="0.45" opacity="0.25"/>
<path d="M-173.9 145.6L1393.4 128.1" stroke="#fff" stroke-width="0.45" opacity="0.25"/>
<path d="M-185.2 146.7L1378.9 129.0" stroke="#fff" stroke-width="1.30" opacity="1.00"/>
<path d="M-197.0 147.9L1390.0 129.6" stroke="#fff" stroke-width="0.45" opacity="0.26"/>
<path d="M-182.2 148.8L1375.8 130.5" stroke="#fff" stroke-width="0.45" opacity="0.26"/>
<path d="M-194.3 150.0L1387.4 131.2" stroke="#fff" stroke-width="0.45" opacity="0.26"/>
<path d="M-179.9 150.9L1399.2 131.8" stroke="#fff" stroke-width="0.45" opacity="0.27"/>
<path d="M-192.3 152.2L1385.4 132.8" stroke="#fff" stroke-width="0.45" opacity="0.27"/>
<path d="M-178.5 153.2L1397.6 133.5" stroke="#fff" stroke-width="0.45" opacity="0.28"/>
<path d="M-191.2 154.6L1384.3 134.6" stroke="#fff" stroke-width="0.45" opacity="0.28"/>
<path d="M-177.8 155.7L1396.8 135.3" stroke="#fff" stroke-width="0.45" opacity="0.29"/>
<path d="M-191.0 157.2L1383.9 136.5" stroke="#fff" stroke-width="0.45" opacity="0.29"/>
<path d="M-178.0 158.3L1397.0 137.3" stroke="#fff" stroke-width="1.30" opacity="1.00"/>
<path d="M-191.7 159.9L1384.5 138.5" stroke="#fff" stroke-width="0.45" opacity="0.30"/>
<path d="M-179.2 161.2L1398.0 139.3" stroke="#fff" stroke-width="0.45" opacity="0.31"/>
<path d="M-193.5 162.9L1386.0 140.6" stroke="#fff" stroke-width="0.45" opacity="0.31"/>
<path d="M-181.5 164.3L1374.4 141.9" stroke="#fff" stroke-width="0.45" opacity="0.32"/>
<path d="M-196.3 166.2L1388.6 142.9" stroke="#fff" stroke-width="0.45" opacity="0.33"/>
<path d="M-184.8 167.7L1377.5 144.3" stroke="#fff" stroke-width="0.45" opacity="0.33"/>
<path d="M-173.8 169.3L1392.3 145.4" stroke="#fff" stroke-width="0.45" opacity="0.34"/>
<path d="M-189.4 171.3L1381.8 146.9" stroke="#fff" stroke-width="0.45" opacity="0.35"/>
<path d="M-179.0 173.1L1397.2 148.0" stroke="#fff" stroke-width="0.45" opacity="0.35"/>
<path d="M-195.3 175.3L1387.3 149.6" stroke="#fff" stroke-width="1.30" opacity="1.00"/>
<path d="M-185.5 177.3L1377.8 151.3" stroke="#fff" stroke-width="0.45" opacity="0.37"/>
<path d="M-176.2 179.3L1394.2 152.6" stroke="#fff" stroke-width="0.45" opacity="0.38"/>
<path d="M-193.7 181.9L1385.4 154.4" stroke="#fff" stroke-width="0.45" opacity="0.39"/>
<path d="M-185.0 184.1L1377.0 156.3" stroke="#fff" stroke-width="0.45" opacity="0.40"/>
<path d="M-176.9 186.4L1394.6 157.8" stroke="#fff" stroke-width="0.45" opacity="0.41"/>
<path d="M-195.7 189.4L1387.0 159.9" stroke="#fff" stroke-width="0.45" opacity="0.42"/>
<path d="M-188.4 192.0L1379.9 162.0" stroke="#fff" stroke-width="0.45" opacity="0.43"/>
<path d="M-181.7 194.8L1399.0 163.7" stroke="#fff" stroke-width="0.45" opacity="0.44"/>
<path d="M-175.5 197.7L1392.7 166.1" stroke="#fff" stroke-width="0.45" opacity="0.45"/>
<path d="M-196.3 201.3L1387.1 168.5" stroke="#fff" stroke-width="1.30" opacity="1.00"/>
<path d="M-191.2 204.6L1382.0 171.1" stroke="#fff" stroke-width="0.45" opacity="0.47"/>
<path d="M-186.7 208.1L1377.6 173.9" stroke="#fff" stroke-width="0.45" opacity="0.49"/>
<path d="M-182.9 211.9L1399.4 176.1" stroke="#fff" stroke-width="0.45" opacity="0.50"/>
<path d="M-179.8 215.8L1396.2 179.2" stroke="#fff" stroke-width="0.45" opacity="0.52"/>
<path d="M-177.4 220.1L1393.6 182.4" stroke="#fff" stroke-width="0.45" opacity="0.53"/>
<path d="M-175.9 224.6L1391.9 185.7" stroke="#fff" stroke-width="0.45" opacity="0.55"/>
<path d="M-175.1 229.5L1390.9 189.3" stroke="#fff" stroke-width="0.45" opacity="0.57"/>
<path d="M-175.2 234.7L1390.8 193.2" stroke="#fff" stroke-width="0.45" opacity="0.59"/>
<path d="M-176.3 240.4L1391.6 197.2" stroke="#fff" stroke-width="0.47" opacity="0.61"/>
<path d="M-178.4 246.5L1393.4 201.6" stroke="#fff" stroke-width="1.30" opacity="1.00"/>
<path d="M-181.5 253.1L1396.3 206.3" stroke="#fff" stroke-width="0.51" opacity="0.66"/>
<path d="M-185.9 260.3L1374.6 212.1" stroke="#fff" stroke-width="0.53" opacity="0.69"/>
<path d="M-191.7 268.2L1379.8 217.5" stroke="#fff" stroke-width="0.55" opacity="0.72"/>
<path d="M-198.9 276.8L1386.3 223.4" stroke="#fff" stroke-width="0.58" opacity="0.75"/>
<path d="M-181.1 285.3L1394.4 229.8" stroke="#fff" stroke-width="0.60" opacity="0.78"/>
<path d="M-191.4 295.7L1378.3 237.7" stroke="#fff" stroke-width="0.63" opacity="0.82"/>
<path d="M-177.3 306.2L1389.7 245.3" stroke="#fff" stroke-width="0.67" opacity="0.87"/>
<path d="M-191.5 319.0L1377.4 254.8" stroke="#fff" stroke-width="0.70" opacity="0.91"/>
<path d="M-181.7 332.3L1392.9 264.1" stroke="#fff" stroke-width="0.74" opacity="0.95"/>
<path d="M-174.5 347.3L1385.1 275.6" stroke="#fff" stroke-width="1.30" opacity="1.00"/>
<path d="M-196.4 365.7L1380.1 288.5" stroke="#fff" stroke-width="0.84" opacity="0.95"/>
<path d="M-195.3 385.4L1378.2 303.0" stroke="#fff" stroke-width="0.90" opacity="0.95"/>
<path d="M-198.0 408.2L1379.8 319.5" stroke="#fff" stroke-width="0.96" opacity="0.95"/>
<path d="M-178.7 433.4L1385.5 338.4" stroke="#fff" stroke-width="1.04" opacity="0.95"/>
<path d="M-190.7 465.1L1396.0 360.3" stroke="#fff" stroke-width="1.13" opacity="0.95"/>
<path d="M-182.6 501.4L1386.3 387.8" stroke="#fff" stroke-width="1.24" opacity="0.95"/>
<path d="M-181.7 546.0L1383.4 420.6" stroke="#fff" stroke-width="1.37" opacity="0.95"/>
<path d="M-189.6 602.0L1388.9 460.5" stroke="#fff" stroke-width="1.54" opacity="0.95"/>
<path d="M-182.6 671.6L1378.8 512.8" stroke="#fff" stroke-width="1.75" opacity="0.95"/>
<path d="M-190.1 764.6L1382.1 579.7" stroke="#fff" stroke-width="2.33" opacity="1.00"/>
<path d="M-191.0 891.0L1377.4 672.5" stroke="#fff" stroke-width="2.39" opacity="0.95"/>
<path d="M252.4 998.8L1398.0 803.1" stroke="#fff" stroke-width="2.60" opacity="0.95"/>
<path d="M487.1 80.5 L-178.5 141.1 L-178.5 141.3 L487.2 81.7Z" fill="#fff" opacity="1.0"/>
<path d="M487.2 81.1 L-189.8 143.2 L-189.7 143.4 L487.2 81.1Z" fill="#fff" opacity="0.85"/>
<path d="M487.3 81.1 L-176.7 143.0 L-176.7 143.2 L487.3 81.1Z" fill="#fff" opacity="0.85"/>
<path d="M487.3 81.1 L-187.5 145.1 L-187.4 145.3 L487.3 81.1Z" fill="#fff" opacity="0.85"/>
<path d="M487.4 81.1 L-198.0 147.3 L-198.0 147.5 L487.4 81.1Z" fill="#fff" opacity="0.85"/>
<path d="M487.5 81.1 L-184.1 147.1 L-184.1 147.3 L487.5 81.1Z" fill="#fff" opacity="0.85"/>
<path d="M487.5 81.1 L-194.1 149.4 L-194.1 149.6 L487.6 81.1Z" fill="#fff" opacity="0.85"/>
<path d="M487.6 81.1 L-179.8 149.2 L-179.7 149.4 L487.6 81.1Z" fill="#fff" opacity="0.85"/>
<path d="M487.7 81.1 L-189.0 151.5 L-189.0 151.7 L487.7 81.1Z" fill="#fff" opacity="0.85"/>
<path d="M487.8 81.1 L-198.0 153.8 L-198.0 154.0 L487.8 81.1Z" fill="#fff" opacity="0.85"/>
<path d="M487.8 80.5 L-182.8 153.6 L-182.8 153.9 L487.9 81.7Z" fill="#fff" opacity="1.0"/>
<path d="M487.9 81.1 L-191.0 156.0 L-191.0 156.2 L487.9 81.1Z" fill="#fff" opacity="0.85"/>
<path d="M488.0 81.1 L-198.9 158.4 L-198.9 158.7 L488.0 81.1Z" fill="#fff" opacity="0.85"/>
<path d="M488.0 81.1 L-182.7 158.2 L-182.7 158.5 L488.0 81.1Z" fill="#fff" opacity="0.85"/>
<path d="M488.1 81.1 L-189.8 160.7 L-189.7 161.0 L488.1 81.1Z" fill="#fff" opacity="0.85"/>
<path d="M488.2 81.1 L-196.4 163.3 L-196.4 163.6 L488.2 81.1Z" fill="#fff" opacity="0.85"/>
<path d="M488.3 81.1 L-179.2 163.1 L-179.2 163.3 L488.3 81.1Z" fill="#fff" opacity="0.85"/>
<path d="M488.3 81.1 L-184.9 165.7 L-184.9 166.0 L488.3 81.1Z" fill="#fff" opacity="0.85"/>
<path d="M488.4 81.1 L-190.1 168.4 L-190.1 168.7 L488.4 81.1Z" fill="#fff" opacity="0.85"/>
<path d="M488.5 81.1 L-194.8 171.1 L-194.8 171.4 L488.5 81.1Z" fill="#fff" opacity="0.85"/>
<path d="M488.5 80.5 L-199.0 173.9 L-199.0 174.3 L488.6 81.7Z" fill="#fff" opacity="1.0"/>
<path d="M488.6 81.1 L-179.6 173.6 L-179.5 173.9 L488.6 81.1Z" fill="#fff" opacity="0.85"/>
<path d="M488.7 81.1 L-182.6 176.5 L-182.5 176.8 L488.7 81.1Z" fill="#fff" opacity="0.85"/>
<path d="M488.8 81.1 L-185.0 179.4 L-184.9 179.8 L488.8 81.1Z" fill="#fff" opacity="0.85"/>
<path d="M488.8 81.1 L-186.7 182.4 L-186.7 182.8 L488.8 81.1Z" fill="#fff" opacity="0.85"/>
<path d="M488.9 81.1 L-187.7 185.5 L-187.7 185.8 L488.9 81.1Z" fill="#fff" opacity="0.85"/>
<path d="M489.0 81.1 L-188.0 188.6 L-187.9 188.9 L489.0 81.1Z" fill="#fff" opacity="0.85"/>
<path d="M489.0 81.1 L-187.5 191.8 L-187.4 192.1 L489.0 81.1Z" fill="#fff" opacity="0.85"/>
<path d="M489.1 81.1 L-186.2 195.0 L-186.1 195.4 L489.1 81.1Z" fill="#fff" opacity="0.85"/>
<path d="M489.2 81.1 L-184.0 198.3 L-183.9 198.7 L489.2 81.1Z" fill="#fff" opacity="0.85"/>
<path d="M489.2 80.5 L-180.9 201.6 L-180.8 202.1 L489.4 81.7Z" fill="#fff" opacity="1.0"/>
<path d="M489.3 81.1 L-198.5 209.0 L-198.5 209.5 L489.3 81.1Z" fill="#fff" opacity="0.85"/>
<path d="M489.4 81.1 L-193.2 212.6 L-193.1 213.0 L489.4 81.1Z" fill="#fff" opacity="0.85"/>
<path d="M489.5 81.1 L-186.7 216.1 L-186.6 216.6 L489.5 81.1Z" fill="#fff" opacity="0.85"/>
<path d="M489.5 81.1 L-179.2 219.8 L-179.1 220.2 L489.5 81.1Z" fill="#fff" opacity="0.85"/>
<path d="M489.6 81.1 L-191.2 227.9 L-191.1 228.4 L489.6 81.1Z" fill="#fff" opacity="0.85"/>
<path d="M489.7 81.1 L-180.9 231.7 L-180.8 232.1 L489.7 81.1Z" fill="#fff" opacity="0.85"/>
<path d="M489.8 81.1 L-189.4 240.2 L-189.3 240.7 L489.8 81.1Z" fill="#fff" opacity="0.85"/>
<path d="M489.8 81.1 L-196.0 249.0 L-195.9 249.5 L489.8 81.1Z" fill="#fff" opacity="0.85"/>
<path d="M489.9 81.1 L-180.5 253.0 L-180.3 253.5 L489.9 81.1Z" fill="#fff" opacity="0.85"/>
<path d="M489.8 80.5 L-182.6 262.0 L-182.4 262.8 L490.1 81.7Z" fill="#fff" opacity="1.0"/>
<path d="M490.0 81.1 L-182.2 271.4 L-182.0 272.1 L490.0 81.1Z" fill="#fff" opacity="0.85"/>
<path d="M490.1 81.1 L-197.7 286.6 L-197.5 287.2 L490.1 81.1Z" fill="#fff" opacity="0.85"/>
<path d="M490.2 81.1 L-190.8 296.4 L-190.6 297.1 L490.2 81.1Z" fill="#fff" opacity="0.85"/>
<path d="M490.3 81.1 L-198.4 312.4 L-198.2 313.1 L490.3 81.1Z" fill="#fff" opacity="0.85"/>
<path d="M490.3 81.1 L-184.0 322.5 L-183.7 323.2 L490.3 81.1Z" fill="#fff" opacity="0.85"/>
<path d="M490.4 81.1 L-198.6 345.2 L-198.3 346.0 L490.4 81.1Z" fill="#fff" opacity="0.85"/>
<path d="M490.5 81.1 L-190.1 361.8 L-189.8 362.7 L490.5 81.1Z" fill="#fff" opacity="0.85"/>
<path d="M490.5 81.1 L-190.1 384.9 L-189.7 385.9 L490.5 81.1Z" fill="#fff" opacity="0.85"/>
<path d="M490.6 81.1 L-195.1 414.6 L-194.6 415.6 L490.6 81.1Z" fill="#fff" opacity="0.85"/>
<path d="M490.4 80.6 L-188.0 443.6 L-187.3 445.0 L491.0 81.7Z" fill="#fff" opacity="1.0"/>
<path d="M490.8 81.1 L-189.8 484.6 L-189.1 485.7 L490.8 81.1Z" fill="#fff" opacity="0.85"/>
<path d="M490.8 81.1 L-198.8 540.1 L-198.0 541.4 L490.8 81.1Z" fill="#fff" opacity="0.85"/>
<path d="M490.9 81.1 L-195.5 601.9 L-194.4 603.3 L490.9 81.1Z" fill="#fff" opacity="0.85"/>
<path d="M491.0 81.1 L-199.4 690.2 L-198.1 691.8 L491.0 81.1Z" fill="#fff" opacity="0.85"/>
<path d="M491.0 81.1 L-200.3 809.5 L-198.5 811.2 L491.0 81.1Z" fill="#fff" opacity="0.85"/>
<path d="M491.1 81.1 L-192.7 975.4 L-190.3 977.2 L491.1 81.1Z" fill="#fff" opacity="0.85"/>
<path d="M491.2 81.1 L-38.3 993.7 L-35.7 995.2 L491.2 81.1Z" fill="#fff" opacity="0.85"/>
<path d="M491.3 81.1 L131.1 990.9 L133.9 992.0 L491.3 81.1Z" fill="#fff" opacity="0.85"/>
<path d="M491.3 81.1 L299.1 990.0 L302.0 990.6 L491.3 81.1Z" fill="#fff" opacity="0.85"/>
<path d="M490.8 81.1 L466.1 991.2 L470.1 991.3 L492.0 81.1Z" fill="#fff" opacity="1.0"/>
<path d="M491.5 81.1 L634.8 994.6 L637.8 994.1 L491.5 81.1Z" fill="#fff" opacity="0.85"/>
<path d="M491.5 81.1 L805.1 1000.4 L808.0 999.4 L491.5 81.1Z" fill="#fff" opacity="0.85"/>
<path d="M491.6 81.1 L968.6 989.4 L971.3 988.0 L491.6 81.1Z" fill="#fff" opacity="0.85"/>
<path d="M491.7 81.1 L1142.6 998.9 L1145.1 997.2 L491.7 81.1Z" fill="#fff" opacity="0.85"/>
<path d="M491.8 81.1 L1303.5 989.9 L1305.7 987.8 L491.8 81.1Z" fill="#fff" opacity="0.85"/>
<path d="M491.8 81.1 L1383.5 908.8 L1385.4 906.8 L491.8 81.1Z" fill="#fff" opacity="0.85"/>
<path d="M491.9 81.1 L1390.9 793.9 L1392.4 792.0 L491.9 81.1Z" fill="#fff" opacity="0.85"/>
<path d="M492.0 81.1 L1397.2 707.5 L1398.4 705.7 L492.0 81.1Z" fill="#fff" opacity="0.85"/>
<path d="M492.0 81.1 L1398.9 637.7 L1399.9 636.2 L492.0 81.1Z" fill="#fff" opacity="0.85"/>
<path d="M491.8 81.6 L1399.4 581.8 L1400.5 579.9 L492.4 80.6Z" fill="#fff" opacity="1.0"/>
<path d="M492.2 81.1 L1398.5 534.9 L1399.2 533.6 L492.2 81.1Z" fill="#fff" opacity="0.85"/>
<path d="M492.3 81.1 L1397.5 496.1 L1398.0 494.9 L492.3 81.1Z" fill="#fff" opacity="0.85"/>
<path d="M492.3 81.1 L1396.8 463.6 L1397.3 462.4 L492.3 81.1Z" fill="#fff" opacity="0.85"/>
<path d="M492.4 81.1 L1399.5 437.0 L1400.0 435.9 L492.4 81.1Z" fill="#fff" opacity="0.85"/>
<path d="M492.5 81.1 L1395.5 411.6 L1395.9 410.5 L492.5 81.1Z" fill="#fff" opacity="0.85"/>
<path d="M492.5 81.1 L1398.2 391.6 L1398.5 390.6 L492.5 81.1Z" fill="#fff" opacity="0.85"/>
<path d="M492.6 81.1 L1392.7 371.4 L1393.0 370.5 L492.6 81.1Z" fill="#fff" opacity="0.85"/>
<path d="M492.7 81.1 L1390.8 354.6 L1391.1 353.7 L492.7 81.1Z" fill="#fff" opacity="0.85"/>
<path d="M492.8 81.1 L1395.5 341.4 L1395.8 340.6 L492.8 81.1Z" fill="#fff" opacity="0.85"/>
<path d="M492.7 81.7 L1396.1 328.6 L1396.4 327.5 L493.0 80.5Z" fill="#fff" opacity="1.0"/>
<path d="M492.9 81.1 L1392.8 315.7 L1393.0 314.9 L492.9 81.1Z" fill="#fff" opacity="0.85"/>
<path d="M493.0 81.1 L1385.8 303.2 L1386.0 302.5 L493.0 81.1Z" fill="#fff" opacity="0.85"/>
<path d="M493.0 81.1 L1390.1 294.5 L1390.3 293.8 L493.0 81.1Z" fill="#fff" opacity="0.85"/>
<path d="M493.1 81.1 L1392.1 286.0 L1392.2 285.3 L493.1 81.1Z" fill="#fff" opacity="0.85"/>
<path d="M493.2 81.1 L1391.9 277.7 L1392.0 277.0 L493.2 81.1Z" fill="#fff" opacity="0.85"/>
<path d="M493.3 81.1 L1389.6 269.6 L1389.8 269.0 L493.3 81.1Z" fill="#fff" opacity="0.85"/>
<path d="M493.3 81.1 L1385.5 261.7 L1385.6 261.1 L493.3 81.1Z" fill="#fff" opacity="0.85"/>
<path d="M493.4 81.1 L1396.1 257.3 L1396.2 256.7 L493.4 81.1Z" fill="#fff" opacity="0.85"/>
<path d="M493.5 81.1 L1388.7 249.8 L1388.8 249.2 L493.5 81.1Z" fill="#fff" opacity="0.85"/>
<path d="M493.4 81.7 L1396.9 245.7 L1397.0 245.0 L493.6 80.5Z" fill="#fff" opacity="1.0"/>
<path d="M493.6 81.1 L1386.5 238.4 L1386.6 237.9 L493.6 81.1Z" fill="#fff" opacity="0.85"/>
<path d="M493.7 81.1 L1392.5 234.5 L1392.6 234.0 L493.7 81.1Z" fill="#fff" opacity="0.85"/>
<path d="M493.8 81.1 L1397.6 230.7 L1397.7 230.2 L493.8 81.1Z" fill="#fff" opacity="0.85"/>
<path d="M493.8 81.1 L1383.6 224.0 L1383.7 223.5 L493.8 81.1Z" fill="#fff" opacity="0.85"/>
<path d="M493.9 81.1 L1386.8 220.4 L1386.8 219.9 L493.9 81.1Z" fill="#fff" opacity="0.85"/>
<path d="M494.0 81.1 L1389.1 216.9 L1389.2 216.4 L494.0 81.1Z" fill="#fff" opacity="0.85"/>
<path d="M494.0 81.1 L1390.8 213.4 L1390.8 213.0 L494.0 81.1Z" fill="#fff" opacity="0.85"/>
<path d="M494.1 81.1 L1391.7 210.0 L1391.8 209.6 L494.1 81.1Z" fill="#fff" opacity="0.85"/>
<path d="M494.2 81.1 L1391.9 206.7 L1392.0 206.3 L494.2 81.1Z" fill="#fff" opacity="0.85"/>
<path d="M494.2 81.7 L1391.5 203.6 L1391.6 203.0 L494.3 80.5Z" fill="#fff" opacity="1.0"/>
<path d="M494.3 81.1 L1390.4 200.4 L1390.5 200.0 L494.3 81.1Z" fill="#fff" opacity="0.85"/>
<path d="M494.4 81.1 L1388.8 197.3 L1388.8 196.9 L494.4 81.1Z" fill="#fff" opacity="0.85"/>
<path d="M494.5 81.1 L1386.5 194.3 L1386.6 193.9 L494.5 81.1Z" fill="#fff" opacity="0.85"/>
<path d="M494.5 81.1 L1383.7 191.4 L1383.8 191.0 L494.5 81.1Z" fill="#fff" opacity="0.85"/>
<path d="M494.6 81.1 L1380.4 188.5 L1380.4 188.1 L494.6 81.1Z" fill="#fff" opacity="0.85"/>
<path d="M494.7 81.1 L1396.7 188.1 L1396.8 187.7 L494.7 81.1Z" fill="#fff" opacity="0.85"/>
<path d="M494.8 81.1 L1392.5 185.3 L1392.5 184.9 L494.8 81.1Z" fill="#fff" opacity="0.85"/>
<path d="M494.8 81.1 L1387.8 182.6 L1387.8 182.2 L494.8 81.1Z" fill="#fff" opacity="0.85"/>
<path d="M494.9 81.1 L1382.6 179.9 L1382.7 179.6 L494.9 81.1Z" fill="#fff" opacity="0.85"/>
<path d="M494.9 81.7 L1397.6 179.6 L1397.7 179.2 L495.0 80.5Z" fill="#fff" opacity="1.0"/>
<path d="M495.0 81.1 L1391.7 177.0 L1391.7 176.7 L495.0 81.1Z" fill="#fff" opacity="0.85"/>
<path d="M495.1 81.1 L1385.4 174.5 L1385.4 174.1 L495.1 81.1Z" fill="#fff" opacity="0.85"/>
<path d="M495.2 81.1 L1399.5 174.1 L1399.6 173.8 L495.2 81.1Z" fill="#fff" opacity="0.85"/>
<path d="M495.3 81.1 L1392.5 171.7 L1392.5 171.4 L495.3 81.1Z" fill="#fff" opacity="0.85"/>
<path d="M495.3 81.1 L1385.1 169.3 L1385.1 169.0 L495.3 81.1Z" fill="#fff" opacity="0.85"/>
<path d="M495.4 81.1 L1398.5 169.0 L1398.5 168.7 L495.4 81.1Z" fill="#fff" opacity="0.85"/>
<path d="M495.5 81.1 L1390.4 166.7 L1390.5 166.4 L495.5 81.1Z" fill="#fff" opacity="0.85"/>
<path d="M495.5 81.1 L1382.1 164.4 L1382.1 164.2 L495.5 81.1Z" fill="#fff" opacity="0.85"/>
<path d="M495.6 81.1 L1394.8 164.2 L1394.8 163.9 L495.6 81.1Z" fill="#fff" opacity="0.85"/>
<path d="M495.6 81.7 L1385.8 162.0 L1385.8 161.7 L495.7 80.5Z" fill="#fff" opacity="1.0"/></g>
<rect x="272" y="135" width="693" height="665" fill="url(#fog)"/>
<linearGradient id="tsh" x1="0" y1="135" x2="0" y2="143" gradientUnits="userSpaceOnUse"><stop offset="0" stop-color="#dcdee0"/><stop offset="1" stop-color="#dcdee0" stop-opacity="0"/></linearGradient>
<rect x="272" y="135" width="693" height="8" fill="url(#tsh)"/>
<defs>
<linearGradient id="wood" x1="420" y1="0" x2="780" y2="0" gradientUnits="userSpaceOnUse">
<stop offset="0" stop-color="#b08149"/><stop offset=".08" stop-color="#c09056"/><stop offset=".16" stop-color="#ad7c44"/><stop offset=".27" stop-color="#c3945a"/><stop offset=".38" stop-color="#b08048"/><stop offset=".5" stop-color="#c6965b"/><stop offset=".6" stop-color="#b48449"/><stop offset=".72" stop-color="#c5955a"/><stop offset=".85" stop-color="#b6864c"/><stop offset="1" stop-color="#c39358"/></linearGradient>
<linearGradient id="woodL" x1="420" y1="0" x2="780" y2="0" gradientUnits="userSpaceOnUse">
<stop offset="0" stop-color="#bb8b51"/><stop offset=".1" stop-color="#cd9c60"/><stop offset=".2" stop-color="#bb8a4f"/><stop offset=".32" stop-color="#d09f64"/><stop offset=".45" stop-color="#bf8e52"/><stop offset=".55" stop-color="#cf9e63"/><stop offset=".68" stop-color="#c08f53"/><stop offset=".8" stop-color="#ce9d61"/><stop offset="1" stop-color="#c69558"/></linearGradient>
<linearGradient id="woodC" x1="460" y1="0" x2="640" y2="0" gradientUnits="userSpaceOnUse">
<stop offset="0" stop-color="#b88447"/><stop offset=".12" stop-color="#c99658"/><stop offset=".22" stop-color="#b27e43"/><stop offset=".35" stop-color="#ca9c5f"/><stop offset=".5" stop-color="#b98547"/><stop offset=".62" stop-color="#cf9b5c"/><stop offset=".75" stop-color="#b78346"/><stop offset=".88" stop-color="#c99658"/><stop offset="1" stop-color="#bb874a"/></linearGradient>
</defs>
<path d="M412 135L421 187" stroke="#2233ee" stroke-width="1.6" fill="none"/>
<path d="M476 666L474 800" stroke="#f01818" stroke-width="1.5" fill="none"/>
<path d="M731.4 178 L743.8 178 L709.096 660 L686.574 660Z" fill="#1b1b1b"/>
<path d="M772.4 195 L788.2 194.5 L717 660 L712.4 660Z" fill="#1b1b1b"/>
<path d="M731.4 178 L743 177.3 L788.2 194.5 L787 200 L772 200 L770.75 198.75 L743.75 189.5 L731.4 190Z" fill="#1b1b1b"/>
<path d="M744 188.5L771 198.3" stroke="#4d4d4d" stroke-width="0.8" fill="none"/>
<path d="M743 177.6L787.5 194.6" stroke="#444" stroke-width="0.8" fill="none"/>
<path d="M771.5 199L756 330" stroke="#3a3a3a" stroke-width="0.8" fill="none"/>
<path d="M424 203.5 L434.5 184.5 L490 665 L486.5 664Z" fill="#141414"/>
<path d="M424 226.3 L741 217.5 L741 230.5 L426 241.2Z" fill="url(#wood)" stroke="#505156" stroke-width="1.5" stroke-linejoin="round"/>
<path d="M426 241.2 L741 230.5 L763.5 244 L763.5 252 L428 265.2Z" fill="url(#woodL)" stroke="#505156" stroke-width="1.5" stroke-linejoin="round"/>
<path d="M428 265.2 L763.5 252 L763.5 261 L430 273.2Z" fill="url(#wood)" stroke="#505156" stroke-width="1.5" stroke-linejoin="round"/>
<path d="M436 315.8 L731 302.8 L731 315 L438 328.8Z" fill="url(#wood)" stroke="#505156" stroke-width="1.5" stroke-linejoin="round"/>
<path d="M438 328.8 L731 315 L747 331.2 L763 347 L442 363.8Z" fill="url(#woodL)" stroke="#505156" stroke-width="1.5" stroke-linejoin="round"/>
<path d="M442 363.8 L763 347 L763 355 L443 370.8Z" fill="url(#wood)" stroke="#505156" stroke-width="1.5" stroke-linejoin="round"/>
<path d="M447 393 L740 377 L740 386 L449 401.5Z" fill="url(#wood)" stroke="#505156" stroke-width="1.5" stroke-linejoin="round"/>
<path d="M449 401.5 L740 386 L760 400 L760 430 L453 447.5Z" fill="url(#woodL)" stroke="#505156" stroke-width="1.5" stroke-linejoin="round"/>
<path d="M453 447.5 L760 430 L760 437 L454 454.5Z" fill="url(#wood)" stroke="#505156" stroke-width="1.5" stroke-linejoin="round"/>
<path d="M455 488.7 L660 476 L660 487 L455 500.7Z" fill="#1b1b1b"/>
<path d="M462 500.2L660 487.5" stroke="#444" stroke-width="1" fill="none"/>
<path d="M473.1 500.7 L660 487 L660 536 L477.3 551.3Z" fill="url(#woodC)"/>
<path d="M477.3 551.3 L660 536 L660 542 L477.8 557.3Z" fill="#a08a6c" stroke="#505156" stroke-width="1.1" stroke-linejoin="round"/>
<path d="M477.8 557.3 L660 542 L660 639 L486.2 657.3Z" fill="url(#woodC)"/>
<path d="M486.2 657.3 L660 639 L660 649 L486.8 664.5Z" fill="#c39460" stroke="#505156" stroke-width="0.9" stroke-linejoin="round"/>
<path d="M561 545L564 649" stroke="#505156" stroke-width="1.1" fill="none"/>
<rect x="553.5" y="580" width="3.6" height="14" rx="1.8" fill="#4b4d52"/>
<rect x="635.5" y="570" width="3.6" height="14" rx="1.8" fill="#4b4d52"/>
<path d="M407 204 L424 203.5 L486.5 664 L475.5 666Z" fill="#1b1b1b"/>
<path d="M424.5 205L487 664" stroke="#3c3c3c" stroke-width="1" fill="none"/>
<path d="M419 185 L434.5 184.5 L424 203.5 L407 204Z" fill="#1e1e1e"/>
<path d="M408 203.5L424 203" stroke="#4a4a4a" stroke-width="1.2" fill="none"/>
<path d="M424 203L434.5 185" stroke="#4a4a4a" stroke-width="1.2" fill="none"/>
<path d="M450.5 404.5L700 388" stroke="#2a74f0" stroke-width="1.6" fill="none"/>
<path d="M452.5 409.8L700 393.5" stroke="#2a74f0" stroke-width="1.4" fill="none"/>
<path d="M447 448.6L700 433" stroke="#2a74f0" stroke-width="1.4" fill="none"/>
<path d="M445 454.2L700 438" stroke="#2a74f0" stroke-width="1.6" fill="none"/>
<path d="M450.5 404.5L445 454.2" stroke="#2a74f0" stroke-width="1.6" fill="none"/>
<path d="M594 356 C570 357 540 372 531 405 C528 417 529 421 530 423" fill="none" stroke="#f5502a" stroke-width="2"/>
<path d="M531 426 C540 442 570 452 601 453" fill="none" stroke="#2a78f0" stroke-width="2.2"/>
<path d="M598 362 C604 380 607 410 607 445" fill="none" stroke="#20d09a" stroke-width="2.2"/>
<path d="M596 410L596 318" stroke="#2a78f0" stroke-width="2.4" fill="none"/>
<path d="M596 308 L601.5 320 L590.5 320Z" fill="#2a78f0"/>
<rect x="591.5" y="351.5" width="9" height="11" fill="#2a78f0"/>
<path d="M577.5 419.8L494 425.5" stroke="#20d09a" stroke-width="2.4" fill="none"/>
<path d="M484 426 L497 420 L497.6 431Z" fill="#20d09a"/>
<rect x="528" y="418" width="9" height="9.5" fill="#20d09a"/>
<path d="M598 427L614 472" stroke="#f5502a" stroke-width="2.4" fill="none"/>
<path d="M601 446 L611 443.5 L614 456 L604 458.5Z" fill="#f5502a"/>
<path d="M607.5 467 L619 464 L616 480Z" fill="#f5502a"/>
<circle cx="577" cy="402.5" r="5.5" fill="#9a9b9e"/>
<circle cx="595.6" cy="418" r="2.8" fill="#5a5c62"/>
<ellipse cx="579.4" cy="428.7" rx="6" ry="2.8" fill="#9a9b9e"/>
<path d="M598.8 404L598.8 414" stroke="#9a9b9e" stroke-width="1.2" fill="none"/>
</svg>
<!--/VP-->
<!-- LEFT SIDEBAR -->
<div class="a side"></div>
<div class="a" style="left:0;top:97px;width:34px;height:43px;background:#e6effc"></div>
<svg class="a" style="left:3px;top:109px" width="22" height="20" viewBox="0 0 22 20"><path d="M13 1L21 15H9z" fill="#2e7cf6"/><circle cx="8" cy="12" r="6.5" fill="#5a9cf8" opacity=".95"/></svg>
<svg class="a" style="left:2px;top:152px" width="22" height="22" viewBox="0 0 22 22"><g fill="#8a8d93"><path d="M11 1l5 2.5v5L11 11 6 8.5v-5z"/><path d="M6 10l5 2.5v5L6 20 1 17.5v-5z"/><path d="M16 10l5 2.5v5L16 20l-5-2.5v-5z"/></g><g fill="#b9bbbf"><path d="M11 1l5 2.5L11 6 6 3.5z"/><path d="M6 10l5 2.5L6 15 1 12.5z"/><path d="M16 10l5 2.5L16 15l-5-2.5z"/></g></svg>
<svg class="a" style="left:3px;top:197px" width="20" height="20" viewBox="0 0 20 20"><rect x="0" y="0" width="20" height="20" fill="#8a8d93"/><rect x="2" y="2" width="7" height="7" fill="#d5d6d9"/><rect x="11" y="11" width="7" height="7" fill="#d5d6d9"/><rect x="11" y="2" width="7" height="7" fill="#5f6267"/><rect x="2" y="11" width="7" height="7" fill="#5f6267"/></svg>
<!-- LEFT PANEL -->
<div class="a lp"></div>
<div class="a" style="left:47px;top:113px;font-size:16px;line-height:19px;color:#333;white-space:nowrap">造型库</div>
<div class="a" style="left:34px;top:148px;width:238px;height:1px;background:#eceef0"></div>
<div class="a" style="left:47px;top:162px;font-size:12.5px;line-height:15px;color:#3a3a3a;white-space:nowrap;-webkit-text-stroke:.15px #3a3a3a">平面图形</div>
<svg class="a" style="left:246px;top:165px" width="12" height="8"><path d="M1 7L6 2l5 5" fill="none" stroke="#555" stroke-width="1.4"/></svg>
<div class="a tile" style="left:46px;top:199px"></div>
<div class="a tile" style="left:120px;top:199px"></div>
<div class="a tile" style="left:194px;top:199px"></div>
<div class="a tile" style="left:46px;top:274px"></div>
<svg class="a" style="left:67px;top:209px" width="24" height="24" viewBox="0 0 24 24"><defs><linearGradient id="g1" x1="0" y1="0" x2="0" y2="1"><stop offset="0" stop-color="#d4d5da"/><stop offset="1" stop-color="#b3b5bc"/></linearGradient></defs><rect x="1" y="1" width="22" height="22" fill="url(#g1)" stroke="#a5a7ad" stroke-width="1"/></svg>
<svg class="a" style="left:141px;top:209px" width="24" height="24" viewBox="0 0 24 24"><circle cx="12" cy="12" r="11" fill="url(#g1)" stroke="#a5a7ad" stroke-width="1"/></svg>
<svg class="a" style="left:215px;top:208px" width="24" height="24" viewBox="0 0 24 24"><path d="M12 1l11 8-4 13H5L1 9z" fill="url(#g1)" stroke="#a5a7ad" stroke-width="1"/></svg>
<svg class="a" style="left:66px;top:284px" width="26" height="25" viewBox="0 0 26 25"><path d="M13 1l3.5 8h8.5l-7 5.3 2.7 8.7L13 17.7 5.3 23 8 14.3 1 9h8.5z" fill="url(#g1)" stroke="#a5a7ad" stroke-width="1"/></svg>
<div class="a lbl" style="left:46px;top:243px;width:65px">矩形</div>
<div class="a lbl" style="left:120px;top:243px;width:65px">圆形</div>
<div class="a lbl" style="left:194px;top:243px;width:65px">多边形</div>
<div class="a lbl" style="left:46px;top:318px;width:65px">星形</div>
<div class="a" style="left:34px;top:353px;width:238px;height:1px;background:#eceef0"></div>
<div class="a" style="left:47px;top:366px;font-size:12.5px;line-height:15px;color:#3a3a3a;white-space:nowrap;-webkit-text-stroke:.15px #3a3a3a">几何体</div>
<svg class="a" style="left:246px;top:369px" width="12" height="8"><path d="M1 7L6 2l5 5" fill="none" stroke="#555" stroke-width="1.4"/></svg>
<div class="a tile" style="left:46px;top:402px"></div>
<div class="a tile" style="left:120px;top:402px"></div>
<div class="a tile" style="left:194px;top:402px"></div>
<div class="a tile" style="left:46px;top:477px"></div>
<div class="a tile" style="left:120px;top:477px"></div>
<div class="a tile" style="left:194px;top:477px"></div>
<svg class="a" style="left:66px;top:409px" width="26" height="28" viewBox="0 0 26 28"><path d="M13 1l12 6v14l-12 6-12-6V7z" fill="#c9cacf" stroke="#9fa1a7"/><path d="M1 7l12 6 12-6" fill="none" stroke="#9fa1a7"/><path d="M13 13v14" stroke="#9fa1a7"/><path d="M1 7l12 6v14L1 21z" fill="#d8d9dd"/><path d="M13 1l12 6-12 6L1 7z" fill="#e3e4e7" stroke="#9fa1a7"/></svg>
<svg class="a" style="left:140px;top:409px" width="26" height="26" viewBox="0 0 26 26"><defs><radialGradient id="sg" cx=".4" cy=".35" r=".7"><stop offset="0" stop-color="#e8e9ec"/><stop offset="1" stop-color="#b3b5bb"/></radialGradient></defs><circle cx="13" cy="13" r="12" fill="url(#sg)" stroke="#a2a4aa"/><path d="M13 1c-5 3-5 21 0 24" fill="none" stroke="#a2a4aa" stroke-width=".8"/></svg>
<svg class="a" style="left:215px;top:408px" width="24" height="28" viewBox="0 0 24 28"><path d="M1 5v18a11 4 0 0 0 22 0V5z" fill="#c9cacf" stroke="#9fa1a7"/><ellipse cx="12" cy="5" rx="11" ry="4" fill="#e3e4e7" stroke="#9fa1a7"/></svg>
<svg class="a" style="left:66px;top:484px" width="26" height="28" viewBox="0 0 26 28"><path d="M13 1L1 22a12 5 0 0 0 24 0z" fill="#c9cacf" stroke="#9fa1a7"/></svg>
<svg class="a" style="left:139px;top:488px" width="28" height="20" viewBox="0 0 28 20"><ellipse cx="14" cy="10" rx="13" ry="8.5" fill="#c9cacf" stroke="#9fa1a7"/><ellipse cx="14" cy="9" rx="5" ry="2.8" fill="#f5f5f6" stroke="#9fa1a7"/></svg>
<svg class="a" style="left:213px;top:483px" width="28" height="30" viewBox="0 0 28 30"><path d="M9 2h7l9 25h-6l-2-6H11l-2 6H3z" fill="#a9abb1"/><path d="M7 1h7l9 25h-6l-2-6H9l-2 6H1z" fill="#d5d6da" stroke="#9fa1a7"/><path d="M10 15h4l-2-7z" fill="#f5f5f6" stroke="#9fa1a7"/></svg>
<div class="a lbl" style="left:46px;top:446px;width:65px">立方体</div>
<div class="a lbl" style="left:120px;top:446px;width:65px">球体</div>
<div class="a lbl" style="left:194px;top:446px;width:65px">圆柱体</div>
<div class="a lbl" style="left:46px;top:521px;width:65px">圆锥体</div>
<div class="a lbl" style="left:120px;top:521px;width:65px">圆环</div>
<div class="a lbl" style="left:194px;top:521px;width:65px">3D文字</div>

<!-- SECONDARY TOOLBAR -->
<div class="a tb2"></div>
<svg class="a" style="left:288px;top:107px" width="18" height="18" viewBox="0 0 18 18"><path d="M7 1l10 10-6 6L1 7z" fill="#555"/><path d="M4 4l6 6-2.5 2.5-6-6z" fill="#fff" opacity=".85"/></svg>
<div class="a" style="left:322px;top:104px;width:1px;height:24px;background:#e4e5e8"></div>
<svg class="a" style="left:341px;top:108px" width="16" height="16"><path d="M1.5 14.5l13-13" stroke="#555" stroke-width="1.8"/></svg>
<svg class="a" style="left:384px;top:108px" width="16" height="16"><rect x="1.5" y="1.5" width="13" height="13" fill="none" stroke="#555" stroke-width="1.8"/></svg>
<div class="a caret" style="left:409px;top:115px"></div>
<svg class="a" style="left:433px;top:105px" width="19" height="20" viewBox="0 0 19 20"><path d="M9.5 1v11M6.5 4l3-3 3 3" fill="none" stroke="#555" stroke-width="1.6"/><path d="M9.5 10L18 15l-8.5 4L1 15z" fill="none" stroke="#555" stroke-width="1.6"/></svg>
<div class="a caret" style="left:460px;top:115px"></div>
<svg class="a" style="left:484px;top:106px" width="19" height="19" viewBox="0 0 19 19"><path d="M2 17C3 9 9 3 17 2" fill="none" stroke="#555" stroke-width="1.6"/><path d="M2 2h2M6 2h2M10 2h2M2 6v2M2 10v2" stroke="#555" stroke-width="1.6"/><circle cx="2" cy="17" r="1.6" fill="#555"/><circle cx="17" cy="2" r="1.6" fill="#555"/></svg>
<div class="a caret" style="left:511px;top:115px"></div>
<svg class="a" style="left:537px;top:107px" width="19" height="17" viewBox="0 0 19 17"><path d="M8.5 1v15H1z" fill="#555"/><path d="M10.5 1v15H18z" fill="#bbb"/><path d="M9.5 0v17" stroke="#555" stroke-dasharray="2 1.5"/></svg>
<div class="a caret" style="left:562px;top:115px"></div>
<svg class="a" style="left:588px;top:106px" width="19" height="19" viewBox="0 0 19 19"><rect x="1" y="2" width="6" height="13" fill="none" stroke="#555" stroke-width="1.6"/><path d="M10 2h7v13h-7" fill="none" stroke="#555" stroke-width="1.6" stroke-dasharray="2.2 1.6"/><path d="M1 18h17" stroke="#555" stroke-width="1.2"/></svg>
<div class="a caret" style="left:613px;top:115px"></div>
<svg class="a" style="left:639px;top:107px" width="18" height="18" viewBox="0 0 18 18"><rect x="1" y="6" width="11" height="11" fill="none" stroke="#555" stroke-width="1.7"/><rect x="6" y="1" width="11" height="11" fill="none" stroke="#555" stroke-width="1.7"/><rect x="6" y="6" width="6" height="6" fill="#555"/></svg>
<div class="a caret" style="left:665px;top:115px"></div>
<div class="a" style="left:684px;top:104px;width:1px;height:24px;background:#e4e5e8"></div>
<svg class="a" style="left:699px;top:106px" width="20" height="20" viewBox="0 0 20 20"><path d="M3 16C1 10 6 3 13 3c5 0 5 4 3 8-2 5-8 8-13 5z" fill="#dfe7f5" stroke="#3c5a8c" stroke-width="1.4"/><path d="M4 15C7 10 10 8 14 6M6 8l2 4M10 6l1 4" fill="none" stroke="#3c5a8c" stroke-width="1"/></svg>
<div class="a" style="left:710px;top:98px;width:23px;height:11px;background:#2bc48a;border-radius:2px;color:#fff;font-size:8px;line-height:11px;text-align:center;font-weight:bold">限免</div>
<div class="a" style="left:736px;top:104px;width:1px;height:24px;background:#e4e5e8"></div>
<svg class="a" style="left:753px;top:106px" width="19" height="19" viewBox="0 0 19 19"><path d="M9.5 1v17M1 9.5h17" stroke="#555" stroke-width="1.6"/><path d="M6.5 4l3-3 3 3M6.5 15l3 3 3-3M4 6.5l-3 3 3 3M15 6.5l3 3-3 3" fill="#555" stroke="#555" stroke-width="1.2"/></svg>
<div class="a caret" style="left:779px;top:115px"></div>
<svg class="a" style="left:805px;top:107px" width="18" height="18" viewBox="0 0 18 18"><rect x="1.5" y="1.5" width="15" height="15" fill="none" stroke="#555" stroke-width="1.8" stroke-dasharray="3 2.5"/></svg>
<div class="a caret" style="left:831px;top:115px"></div>
<svg class="a" style="left:856px;top:107px" width="19" height="18" viewBox="0 0 19 18"><rect x="1" y="1" width="6" height="16" fill="#555"/><path d="M3 3h3M3 6h3M3 9h3M3 12h3M3 15h3" stroke="#fff" stroke-width=".8"/><path d="M10 1h7M10 17h7M13.5 2v14M11.5 4l2-2 2 2M11.5 14l2 2 2-2" fill="none" stroke="#555" stroke-width="1.3"/></svg>
<svg class="a" style="left:897px;top:106px" width="19" height="19" viewBox="0 0 19 19"><path d="M12 2l5 5-2 2-5-5z" fill="#555"/><path d="M9 5l5 5-6 7-7-7z" fill="#555"/><path d="M4 11l3 3" stroke="#fff" stroke-width="1"/></svg>
<svg class="a" style="left:938px;top:106px" width="20" height="20" viewBox="0 0 20 20"><path d="M10 1v18M6.5 4l3.5-3 3.5 3M6.5 16l3.5 3 3.5-3" fill="none" stroke="#555" stroke-width="1.5"/><path d="M2 8h16v5H2z" fill="none" stroke="#555" stroke-width="1.5"/></svg>
<div class="a" style="left:954px;top:100px;width:8px;height:8px;border-radius:4px;background:#f5321e"></div>
<!-- RIGHT PANEL -->
<div class="a rp"></div>
<svg class="a" style="left:973px;top:106px" width="6" height="17"><path d="M1 1.5h4M1 5h4M1 8.5h4M1 12h4M1 15.5h4" stroke="#8a8c90" stroke-width="1.4"/></svg>
<div class="a" style="left:983px;top:105px;font-size:15px;line-height:18px;color:#333;white-space:nowrap;-webkit-text-stroke:.35px #333">成组</div>
<div class="a" style="left:967px;top:129px;width:233px;height:666px;background:#fff;border-radius:3px 0 0 3px"></div>
<div class="a" style="left:967px;top:162px;width:233px;height:1px;background:#eceef0"></div>
<div class="a" style="left:1000px;top:139px;width:30px;text-align:center;font-size:13px;line-height:15px;color:#555;white-space:nowrap">坐标</div>
<div class="a" style="left:1066px;top:139px;width:30px;text-align:center;font-size:13px;line-height:15px;color:#1f74f0;white-space:nowrap">对象</div>
<div class="a" style="left:1053px;top:160px;width:58px;height:2px;background:#1f74f0"></div>
<div class="a" style="left:1123px;top:139px;width:30px;text-align:center;font-size:13px;line-height:15px;color:#555;white-space:nowrap">材质</div>
<div class="a" style="left:1156px;top:139px;width:12px;height:12px;border-radius:6px;background:#c7c9cc;color:#fff;font-size:9px;font-weight:bold;line-height:12px;text-align:center">i</div>
<div class="a" style="left:982px;top:174px;font-size:13px;line-height:15px;color:#333;white-space:nowrap">修改器</div>
<svg class="a" style="left:1157px;top:174px" width="14" height="14"><path d="M7 0v14M0 7h14" stroke="#777" stroke-width="1.3"/></svg>
<div class="a" style="left:975px;top:198px;width:213px;height:28px;background:#e3edfb"></div>
<svg class="a" style="left:984px;top:206px" width="12" height="12" viewBox="0 0 12 12"><rect x=".7" y=".7" width="10.6" height="10.6" fill="none" stroke="#555" stroke-width="1.3"/><rect x="3" y="3" width="4" height="4" fill="#555"/><rect x="5" y="5" width="4" height="4" fill="none" stroke="#555" stroke-width="1"/></svg>
<div class="a" style="left:1000px;top:205px;font-size:12px;line-height:15px;color:#1f74f0;white-space:nowrap">成组</div>
<div class="a" style="left:967px;top:351px;width:233px;height:1px;background:#eceef0"></div>

<!-- viewport overlays -->
<div class="a" style="left:272px;top:427px;width:13px;height:45px;background:#fff;border-radius:0 6px 6px 0"></div>
<svg class="a" style="left:274px;top:443px" width="8" height="12"><path d="M6 1L2 6l4 5" fill="none" stroke="#444" stroke-width="1.6"/></svg>
<div class="a" style="left:287px;top:723px;font-size:10px;line-height:12px;color:#dcdde0;white-space:nowrap">&#9786; 酷家乐技术支持</div>
<div class="a" style="left:287px;top:747px;width:118px;height:36px;background:#fff;border-radius:4px"></div>
<div class="a" style="left:299px;top:756px;font-size:15px;line-height:17px;color:#555">2D</div>
<div class="a caret" style="left:324px;top:764px;border-top-color:#999"></div>
<div class="a" style="left:348px;top:753px;width:54px;height:24px;background:#e1edfd;border-radius:2px"></div>
<div class="a" style="left:356px;top:756px;font-size:15px;line-height:17px;color:#1f74f0">3D</div>
<div class="a caret" style="left:382px;top:764px;border-top-color:#1f74f0"></div>
<div class="a" style="left:413px;top:747px;width:36px;height:36px;background:#fff;border-radius:4px"></div>
<svg class="a" style="left:420px;top:757px" width="22" height="16" viewBox="0 0 22 16"><path d="M1 8C4 3 7 1 11 1s7 2 10 7c-3 5-6 7-10 7S4 13 1 8z" fill="none" stroke="#555" stroke-width="1.8"/><circle cx="11" cy="8" r="3.2" fill="#555"/></svg>
<div class="a" style="left:959px;top:547px;width:6px;height:2px;background:#27d13c"></div>
<!-- POPUP TOOLBAR -->
<div class="a" style="left:630px;top:331px;width:335px;height:39px;background:#33373d;border-radius:5px 5px 0 5px"></div>
<div class="a" style="left:644px;top:334px;width:34px;height:30px;background:#474a50"></div>
<svg class="a" style="left:634px;top:343px" width="6" height="16"><path d="M1 1.5h4M1 5.5h4M1 9.5h4M1 13.5h4" stroke="#9a9ca0" stroke-width="1.4"/></svg>
<svg class="a" style="left:651px;top:341px" width="20" height="18" viewBox="0 0 20 18"><path d="M10 1v12M7.5 3.5L10 1l2.5 2.5" fill="none" stroke="#eee" stroke-width="1.7"/><path d="M5 6.5C2.5 7.5 1 8.5 1 10c0 2.5 4 4.5 9 4.5s9-2 9-4.5c0-1.5-1.5-2.5-4-3.5" fill="none" stroke="#eee" stroke-width="1.7"/><path d="M11 12l-2.5 2.5L11 17" fill="none" stroke="#eee" stroke-width="1.7"/></svg>
<svg class="a" style="left:691px;top:341px" width="18" height="18" viewBox="0 0 18 18"><rect x="1" y="1" width="15" height="15" fill="none" stroke="#ddd" stroke-width="1.6" stroke-dasharray="2 1.5"/><rect x="1" y="11" width="5" height="5" fill="#ddd"/><path d="M6 12L15 3l2 2-9 9z" fill="#ddd"/></svg>
<svg class="a" style="left:730px;top:341px" width="18" height="18" viewBox="0 0 18 18"><rect x="1" y="1" width="16" height="16" fill="none" stroke="#ddd" stroke-width="1.6" stroke-dasharray="2 1.5"/><rect x="5" y="5" width="6" height="6" fill="#ddd"/><rect x="8" y="8" width="5" height="5" fill="#888" stroke="#ddd"/></svg>
<svg class="a" style="left:769px;top:341px" width="19" height="19" viewBox="0 0 19 19"><path d="M9.5 2v15M2 9.5h15" stroke="#ddd" stroke-width="1.7"/><path d="M6.5 4.5l3-3.5 3 3.5zM6.5 14.5l3 3.5 3-3.5zM4.5 6.5L1 9.5l3.5 3zM14.5 6.5l3.5 3-3.5 3z" fill="#ddd"/></svg>
<svg class="a" style="left:809px;top:341px" width="18" height="18" viewBox="0 0 18 18"><rect x="1" y="5" width="12" height="12" fill="none" stroke="#ddd" stroke-width="1.6"/><rect x="5" y="1" width="12" height="12" fill="#ddd"/><path d="M11 4v6M8 7h6" stroke="#33373d" stroke-width="1.6"/></svg>
<svg class="a" style="left:847px;top:341px" width="20" height="18" viewBox="0 0 20 18"><path d="M1 9C4 4.5 7 3 10 3s6 1.5 9 6c-3 4.5-6 6-9 6s-6-1.5-9-6z" fill="none" stroke="#ddd" stroke-width="1.7"/><circle cx="10" cy="9" r="2.5" fill="#ddd"/><path d="M3 16L17 2" stroke="#ddd" stroke-width="1.7"/></svg>
<svg class="a" style="left:888px;top:340px" width="20" height="20" viewBox="0 0 20 20"><circle cx="10" cy="6" r="4.8" fill="#ddd"/><path d="M1 19c0-5 4-7.5 9-7.5s9 2.5 9 7.5z" fill="#ddd"/></svg>
<svg class="a" style="left:929px;top:341px" width="16" height="18" viewBox="0 0 16 18"><path d="M1 3h14M5.5 3V1h5v2" fill="none" stroke="#ddd" stroke-width="1.6"/><path d="M2.5 5h11l-1 12h-9z" fill="#ddd"/></svg>
<!-- POPUP CARD -->
<div class="a" style="left:639px;top:364px;width:321px;height:426px;background:#fff;border-radius:4px;box-shadow:0 1px 4px rgba(0,0,0,.12)"></div>
<div class="a" style="left:654px;top:377px;width:291px;height:222px;background:linear-gradient(180deg,#eef1f3 0%,#f1f3f4 40%,#eceeef 100%);border-left:2px solid #8d8f93;border-right:2px solid #a5a7aa;overflow:hidden">
<!--CARDIMG--><svg width="287" height="222" viewBox="0 0 287 222" style="display:block">
<defs><linearGradient id="cbg" x1="0" y1="0" x2="0" y2="1"><stop offset="0" stop-color="#f5f7f8"/><stop offset=".5" stop-color="#eff1f2"/><stop offset="1" stop-color="#eaeced"/></linearGradient>
<linearGradient id="cfog" x1="0" y1="0" x2="0" y2="1"><stop offset="0" stop-color="#f6f8f9" stop-opacity=".9"/><stop offset=".35" stop-color="#f3f5f6" stop-opacity="0"/></linearGradient></defs>
<rect width="287" height="222" fill="url(#cbg)"/>
<path d="M-96.3 299.9L-100.0 295.0" stroke="#fff" stroke-width=".8" opacity="0.45"/><path d="M-64.4 300.0L-99.2 259.8" stroke="#fff" stroke-width=".8" opacity="0.45"/><path d="M-32.7 300.0L-98.3 231.7" stroke="#fff" stroke-width=".8" opacity="0.75"/><path d="M377.6 299.2L399.9 285.2" stroke="#fff" stroke-width=".8" opacity="0.45"/><path d="M-1.2 299.8L-98.5 207.8" stroke="#fff" stroke-width=".8" opacity="0.45"/><path d="M329.5 299.6L399.6 259.1" stroke="#fff" stroke-width=".8" opacity="0.45"/><path d="M29.9 299.2L-99.6 187.0" stroke="#fff" stroke-width=".8" opacity="0.45"/><path d="M281.3 300.0L398.6 237.4" stroke="#fff" stroke-width=".8" opacity="0.45"/><path d="M62.0 299.6L-98.9 170.9" stroke="#fff" stroke-width=".8" opacity="0.45"/><path d="M234.6 299.5L399.9 217.7" stroke="#fff" stroke-width=".8" opacity="0.45"/><path d="M92.8 298.9L-97.6 157.5" stroke="#fff" stroke-width=".8" opacity="0.45"/><path d="M186.1 300.0L396.9 202.6" stroke="#fff" stroke-width=".8" opacity="0.75"/><path d="M123.8 298.5L-98.5 144.4" stroke="#fff" stroke-width=".8" opacity="0.75"/><path d="M139.4 299.6L396.9 188.0" stroke="#fff" stroke-width=".8" opacity="0.45"/><path d="M157.4 299.8L-97.3 134.2" stroke="#fff" stroke-width=".8" opacity="0.45"/><path d="M93.7 298.9L399.9 174.0" stroke="#fff" stroke-width=".8" opacity="0.45"/><path d="M186.4 298.2L-97.7 124.4" stroke="#fff" stroke-width=".8" opacity="0.45"/><path d="M45.1 299.3L399.7 162.7" stroke="#fff" stroke-width=".8" opacity="0.45"/><path d="M216.6 297.4L-99.4 114.8" stroke="#fff" stroke-width=".8" opacity="0.45"/><path d="M3.3 297.2L395.4 154.1" stroke="#fff" stroke-width=".8" opacity="0.45"/><path d="M248.3 297.5L-97.7 108.1" stroke="#fff" stroke-width=".8" opacity="0.45"/><path d="M-43.0 296.9L398.7 143.8" stroke="#fff" stroke-width=".8" opacity="0.75"/><path d="M282.0 298.7L-96.8 101.7" stroke="#fff" stroke-width=".8" opacity="0.75"/><path d="M-95.3 298.6L397.1 136.0" stroke="#fff" stroke-width=".8" opacity="0.45"/><path d="M310.9 297.3L-96.7 95.4" stroke="#fff" stroke-width=".8" opacity="0.45"/><path d="M-93.7 283.2L396.6 128.6" stroke="#fff" stroke-width=".8" opacity="0.45"/><path d="M340.7 296.5L-97.3 89.4" stroke="#fff" stroke-width=".8" opacity="0.45"/><path d="M-92.6 269.2L397.1 121.6" stroke="#fff" stroke-width=".8" opacity="0.45"/><path d="M371.6 296.3L-98.7 83.6" stroke="#fff" stroke-width=".8" opacity="0.45"/><path d="M-92.0 256.6L398.7 114.8" stroke="#fff" stroke-width=".8" opacity="0.45"/><path d="M394.0 292.4L-95.3 80.4" stroke="#fff" stroke-width=".8" opacity="0.45"/><path d="M-91.7 245.0L393.7 110.4" stroke="#fff" stroke-width=".8" opacity="0.75"/><path d="M396.9 280.7L-97.8 74.9" stroke="#fff" stroke-width=".8" opacity="0.75"/><path d="M-99.7 236.6L396.9 104.2" stroke="#fff" stroke-width=".8" opacity="0.45"/><path d="M399.9 270.0L-95.3 71.9" stroke="#fff" stroke-width=".8" opacity="0.45"/><path d="M-99.5 226.6L393.2 100.2" stroke="#fff" stroke-width=".8" opacity="0.45"/><path d="M395.4 257.1L-98.8 66.8" stroke="#fff" stroke-width=".8" opacity="0.45"/><path d="M-99.5 217.5L397.8 94.4" stroke="#fff" stroke-width=".8" opacity="0.45"/><path d="M399.2 248.3L-97.1 63.9" stroke="#fff" stroke-width=".8" opacity="0.45"/><path d="M-99.9 209.0L395.2 90.7" stroke="#fff" stroke-width=".8" opacity="0.45"/><path d="M396.6 237.7L-95.7 61.2" stroke="#fff" stroke-width=".8" opacity="0.45"/><path d="M-94.5 199.9L393.0 87.2" stroke="#fff" stroke-width=".8" opacity="0.75"/><path d="M395.1 228.3L-94.6 58.5" stroke="#fff" stroke-width=".8" opacity="0.75"/><path d="M-95.7 192.7L399.4 82.0" stroke="#fff" stroke-width=".8" opacity="0.45"/><path d="M399.6 221.5L-99.6 54.0" stroke="#fff" stroke-width=".8" opacity="0.45"/><path d="M-96.9 186.0L398.2 78.7" stroke="#fff" stroke-width=".8" opacity="0.45"/><path d="M399.3 213.5L-99.1 51.5" stroke="#fff" stroke-width=".8" opacity="0.45"/><path d="M-98.3 179.7L397.3 75.6" stroke="#fff" stroke-width=".8" opacity="0.45"/><path d="M399.7 206.3L-98.9 49.1" stroke="#fff" stroke-width=".8" opacity="0.45"/><path d="M-99.8 173.9L396.8 72.6" stroke="#fff" stroke-width=".8" opacity="0.45"/><path d="M397.0 198.5L-98.9 46.8" stroke="#fff" stroke-width=".8" opacity="0.45"/><path d="M-97.3 167.6L396.7 69.7" stroke="#fff" stroke-width=".8" opacity="0.75"/><path d="M398.9 192.5L-99.1 44.5" stroke="#fff" stroke-width=".8" opacity="0.75"/><path d="M-99.2 162.4L396.8 66.9" stroke="#fff" stroke-width=".8" opacity="0.45"/><path d="M398.3 186.2L-99.6 42.4" stroke="#fff" stroke-width=".8" opacity="0.45"/><path d="M-97.8 157.0L397.3 64.2" stroke="#fff" stroke-width=".8" opacity="0.45"/><path d="M398.7 180.4L-94.0 41.9" stroke="#fff" stroke-width=".8" opacity="0.45"/><path d="M-99.9 152.4L398.1 61.6" stroke="#fff" stroke-width=".8" opacity="0.45"/><path d="M399.8 175.2L-94.8 39.8" stroke="#fff" stroke-width=".8" opacity="0.45"/><path d="M-99.2 147.6L399.2 59.0" stroke="#fff" stroke-width=".8" opacity="0.45"/><path d="M399.9 170.0L-95.8 37.8" stroke="#fff" stroke-width=".8" opacity="0.45"/><path d="M-99.0 143.2L391.6 58.1" stroke="#fff" stroke-width=".8" opacity="0.75"/><path d="M399.5 164.9L-97.0 35.8" stroke="#fff" stroke-width=".8" opacity="0.75"/><path d="M-99.1 139.0L393.1 55.7" stroke="#fff" stroke-width=".8" opacity="0.45"/><path d="M399.4 160.1L-98.3 33.8" stroke="#fff" stroke-width=".8" opacity="0.45"/><path d="M-99.6 135.0L394.9 53.4" stroke="#fff" stroke-width=".8" opacity="0.45"/><path d="M399.9 155.7L-99.8 32.0" stroke="#fff" stroke-width=".8" opacity="0.45"/><path d="M-98.6 131.0L397.0 51.1" stroke="#fff" stroke-width=".8" opacity="0.45"/><path d="M399.7 151.3L-95.0 31.7" stroke="#fff" stroke-width=".8" opacity="0.45"/><path d="M-99.8 127.5L399.3 48.9" stroke="#fff" stroke-width=".8" opacity="0.45"/><path d="M399.9 147.2L-96.8 29.8" stroke="#fff" stroke-width=".8" opacity="0.45"/><path d="M-99.7 124.0L392.5 48.2" stroke="#fff" stroke-width=".8" opacity="0.75"/><path d="M399.9 143.3L-98.7 28.1" stroke="#fff" stroke-width=".8" opacity="0.75"/><path d="M-98.9 120.6L395.2 46.1" stroke="#fff" stroke-width=".8" opacity="0.45"/><path d="M399.9 139.5L-94.3 27.8" stroke="#fff" stroke-width=".8" opacity="0.45"/><path d="M-99.9 117.5L398.1 44.0" stroke="#fff" stroke-width=".8" opacity="0.45"/><path d="M399.8 135.9L-96.4 26.1" stroke="#fff" stroke-width=".8" opacity="0.45"/><path d="M-99.5 114.4L391.7 43.4" stroke="#fff" stroke-width=".8" opacity="0.45"/><path d="M399.3 132.4L-98.7 24.4" stroke="#fff" stroke-width=".8" opacity="0.45"/><path d="M-99.9 111.5L394.9 41.5" stroke="#fff" stroke-width=".8" opacity="0.45"/><path d="M399.6 129.1L-94.5 24.2" stroke="#fff" stroke-width=".8" opacity="0.45"/><path d="M-99.8 108.6L398.3 39.6" stroke="#fff" stroke-width=".8" opacity="0.75"/><path d="M399.2 125.8L-97.0 22.6" stroke="#fff" stroke-width=".8" opacity="0.75"/><path d="M-100.0 105.9L392.4 39.0" stroke="#fff" stroke-width=".8" opacity="0.45"/><path d="M398.7 122.7L-99.6 21.1" stroke="#fff" stroke-width=".8" opacity="0.45"/><path d="M-99.9 103.3L396.1 37.2" stroke="#fff" stroke-width=".8" opacity="0.45"/><path d="M398.5 119.7L-95.7 20.9" stroke="#fff" stroke-width=".8" opacity="0.45"/><path d="M-100.0 100.8L400.0 35.4" stroke="#fff" stroke-width=".8" opacity="0.45"/><path d="M399.2 117.0L-98.5 19.3" stroke="#fff" stroke-width=".8" opacity="0.45"/><path d="M-100.0 98.4L394.3 34.9" stroke="#fff" stroke-width=".8" opacity="0.45"/><path d="M399.2 114.3L-94.8 19.2" stroke="#fff" stroke-width=".8" opacity="0.45"/><path d="M-99.9 96.0L398.5 33.2" stroke="#fff" stroke-width=".8" opacity="0.75"/><path d="M398.6 111.6L-97.7 17.7" stroke="#fff" stroke-width=".8" opacity="0.75"/><path d="M-99.9 93.8L393.1 32.8" stroke="#fff" stroke-width=".8" opacity="0.45"/><path d="M399.6 109.2L-94.1 17.5" stroke="#fff" stroke-width=".8" opacity="0.45"/><path d="M-99.9 91.6L397.5 31.1" stroke="#fff" stroke-width=".8" opacity="0.45"/><path d="M397.7 106.4L-97.2 16.1" stroke="#fff" stroke-width=".8" opacity="0.45"/><path d="M-99.5 89.5L392.2 30.7" stroke="#fff" stroke-width=".8" opacity="0.45"/><path d="M397.8 104.1L-93.7 16.0" stroke="#fff" stroke-width=".8" opacity="0.45"/><path d="M-99.4 87.4L396.9 29.1" stroke="#fff" stroke-width=".8" opacity="0.45"/><path d="M397.4 101.8L-97.0 14.6" stroke="#fff" stroke-width=".8" opacity="0.45"/><path d="M-99.5 85.5L391.8 28.7" stroke="#fff" stroke-width=".8" opacity="0.75"/><path d="M399.6 99.9L-93.6 14.4" stroke="#fff" stroke-width=".8" opacity="0.75"/><path d="M-99.0 83.6L396.7 27.2" stroke="#fff" stroke-width=".8" opacity="0.45"/><path d="M398.6 97.6L-97.1 13.1" stroke="#fff" stroke-width=".8" opacity="0.45"/><path d="M-99.1 81.7L391.8 26.8" stroke="#fff" stroke-width=".8" opacity="0.45"/><path d="M397.2 95.3L-93.8 13.0" stroke="#fff" stroke-width=".8" opacity="0.45"/><path d="M-98.9 79.9L396.9 25.4" stroke="#fff" stroke-width=".8" opacity="0.45"/><path d="M398.7 93.6L-97.4 11.7" stroke="#fff" stroke-width=".8" opacity="0.45"/><path d="M-99.5 78.3L392.2 25.0" stroke="#fff" stroke-width=".8" opacity="0.45"/><path d="M396.6 91.3L-94.2 11.6" stroke="#fff" stroke-width=".8" opacity="0.45"/><path d="M-99.9 76.7L397.5 23.6" stroke="#fff" stroke-width=".8" opacity="0.75"/><path d="M397.6 89.6L-97.9 10.3" stroke="#fff" stroke-width=".8" opacity="0.75"/><path d="M-98.6 74.9L392.9 23.3" stroke="#fff" stroke-width=".8" opacity="0.45"/><path d="M398.6 88.0L-94.9 10.2" stroke="#fff" stroke-width=".8" opacity="0.45"/><path d="M-98.5 73.3L398.4 21.9" stroke="#fff" stroke-width=".8" opacity="0.45"/><path d="M399.3 86.3L-98.7 9.0" stroke="#fff" stroke-width=".8" opacity="0.45"/><path d="M-99.8 71.9L393.9 21.6" stroke="#fff" stroke-width=".8" opacity="0.45"/><path d="M399.9 84.7L-95.7 8.9" stroke="#fff" stroke-width=".8" opacity="0.45"/><path d="M-99.3 70.4L399.6 20.3" stroke="#fff" stroke-width=".8" opacity="0.45"/><path d="M396.2 82.5L-99.7 7.7" stroke="#fff" stroke-width=".8" opacity="0.45"/><path d="M-98.5 68.9L395.3 20.0" stroke="#fff" stroke-width=".8" opacity="0.75"/><path d="M396.4 80.9L-96.8 7.6" stroke="#fff" stroke-width=".8" opacity="0.75"/><path d="M-99.4 67.6L391.0 19.7" stroke="#fff" stroke-width=".8" opacity="0.45"/><path d="M396.4 79.3L-93.9 7.5" stroke="#fff" stroke-width=".8" opacity="0.45"/><path d="M-98.3 66.1L396.9 18.4" stroke="#fff" stroke-width=".8" opacity="0.45"/><path d="M396.2 77.8L-98.0 6.4" stroke="#fff" stroke-width=".8" opacity="0.45"/><path d="M-98.9 64.9L392.7 18.2" stroke="#fff" stroke-width=".8" opacity="0.45"/><path d="M395.9 76.3L-95.2 6.3" stroke="#fff" stroke-width=".8" opacity="0.45"/><path d="M-99.5 63.6L398.8 17.0" stroke="#fff" stroke-width=".8" opacity="0.45"/><path d="M400.0 75.4L-99.5 5.2" stroke="#fff" stroke-width=".8" opacity="0.45"/><path d="M-97.8 62.2L394.8 16.7" stroke="#fff" stroke-width=".8" opacity="0.75"/><path d="M399.4 73.9L-96.8 5.1" stroke="#fff" stroke-width=".8" opacity="0.75"/><path d="M-98.1 61.1L390.8 16.5" stroke="#fff" stroke-width=".8" opacity="0.45"/><path d="M398.7 72.5L-94.1 5.0" stroke="#fff" stroke-width=".8" opacity="0.45"/><path d="M-98.3 59.9L397.1 15.3" stroke="#fff" stroke-width=".8" opacity="0.45"/><path d="M397.8 71.0L-98.4 4.0" stroke="#fff" stroke-width=".8" opacity="0.45"/><path d="M-98.5 58.8L393.2 15.1" stroke="#fff" stroke-width=".8" opacity="0.45"/><path d="M396.8 69.6L-95.8 3.9" stroke="#fff" stroke-width=".8" opacity="0.45"/><path d="M-98.5 57.6L399.6 13.9" stroke="#fff" stroke-width=".8" opacity="0.45"/><path d="M395.6 68.2L-93.3 3.8" stroke="#fff" stroke-width=".8" opacity="0.45"/><path d="M-98.4 56.5L395.8 13.7" stroke="#fff" stroke-width=".8" opacity="0.75"/><path d="M399.4 67.4L-97.8 2.8" stroke="#fff" stroke-width=".8" opacity="0.75"/>
<rect width="287" height="222" fill="url(#cfog)"/>
<path d="M93 94 L157 108 L152 172.5 L94 150Z" fill="#b9c2d3"/>
<path d="M157 108 L179 91.5 L173 142.5 L152 172.5Z" fill="#a9b2c3"/>
<path d="M93 94 L121 81 L179 91.5 L157 108Z" fill="#bcc5d6"/>
<path d="M93 94L121 81L179 91.5L173 142.5L152 172.5L94 150Z M93 94L157 108L179 91.5 M157 108L152 172.5" fill="none" stroke="#86a8e6" stroke-width=".9"/>
<path d="M135 115L137 83" stroke="#2f7af2" stroke-width="2.2"/>
<path d="M134 85L137.5 77L141 85Z" fill="#2f7af2"/>
<path d="M142 123L174 133" stroke="#f5502a" stroke-width="2"/>
<path d="M172 129L179.5 134.5L170 136Z" fill="#f5502a"/>
<rect x="153" y="100.5" width="29" height="8" rx="1.5" fill="#3a3c40"/>
<text x="167.5" y="106.80000000000001" font-size="5.2" fill="#e8e8e8" text-anchor="middle" font-family="Liberation Sans, sans-serif">795.10 mm</text>
<circle cx="145" cy="116" r="2.8" fill="#f2f2f2" stroke="#666" stroke-width="1"/>
<path d="M145 113.5v5" stroke="#666" stroke-width=".8"/>
</svg>
</div>
<div class="a" style="left:822px;top:567px;width:107px;height:22px;background:#a0a1a3"></div>
<div class="a" style="left:822px;top:568px;width:107px;text-align:center;font-size:16px;line-height:20px;color:#fff;font-weight:bold;white-space:nowrap">两轴平面移动</div>
<div class="a" style="left:655px;top:616px;font-size:16px;line-height:19px;color:#333;font-weight:bold;white-space:nowrap">操作轴：移动/旋转</div>
<div class="a" style="left:655px;top:648px;width:295px;font-size:13.5px;line-height:20.8px;color:#777">1. 拖拽操作轴进行移动/旋转对象，可选择单<br>轴、平面、中心点不同的控件<br>2. 单击操作轴，可输入精确数值，多个输入框<br>可按 <span style="background:#f2f2f2;color:#888;padding:1px 4px;border-radius:2px">Tab</span> 进行切换</div>
<div class="a" style="left:862px;top:743px;width:82px;height:31px;background:#2080f5;border-radius:2px"></div>
<div class="a" style="left:862px;top:750px;width:82px;text-align:center;font-size:14px;line-height:17px;color:#fff;white-space:nowrap">下一步</div>
<!-- HELP BUBBLE -->
<div class="a" style="left:50px;top:41px;width:110px;height:36px;background:#2b7ff6;border-radius:5px;box-shadow:0 2px 6px rgba(0,0,0,.12)"></div>
<div class="a" style="left:100px;top:35px;width:0;height:0;border-left:6px solid transparent;border-right:6px solid transparent;border-bottom:6px solid #2b7ff6"></div>
<div class="a" style="left:62px;top:53px;font-size:13px;line-height:15px;color:#fff;white-space:nowrap">有问题，找小酷</div>
<svg class="a" style="left:148px;top:44px" width="8" height="8"><path d="M1 1l6 6M7 1L1 7" stroke="#fff" stroke-width="1.5"/></svg>
</body></html>
